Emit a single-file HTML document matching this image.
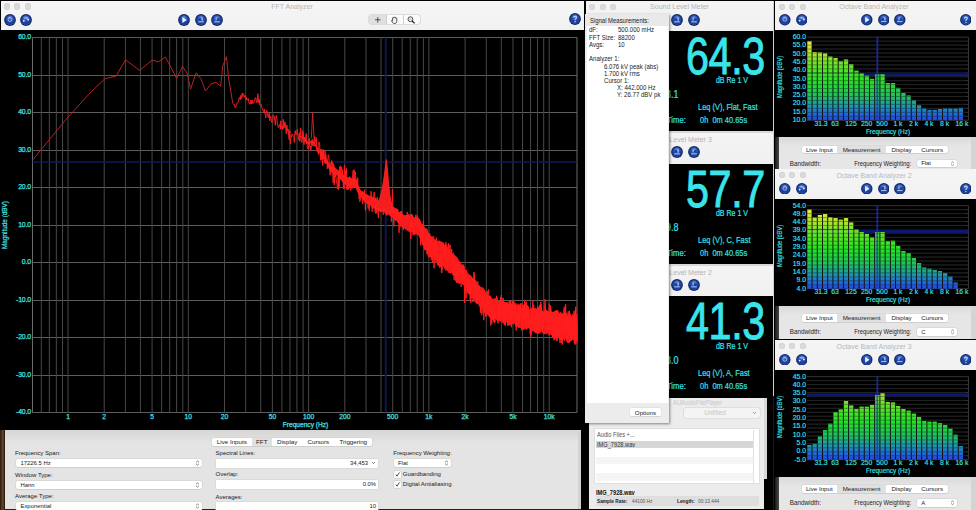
<!DOCTYPE html>
<html><head><meta charset="utf-8"><title>FFT Analyzer</title>
<style>
html,body{margin:0;padding:0;}
body{width:976px;height:510px;overflow:hidden;position:relative;background:#000;font-family:"Liberation Sans", sans-serif;}
div{box-sizing:border-box;}
</style></head><body>
<svg width="0" height="0" style="position:absolute"><defs><radialGradient id="bg1" cx="50%" cy="25%" r="75%"><stop offset="0" stop-color="#7094dc"/><stop offset="0.35" stop-color="#2c54b4"/><stop offset="0.75" stop-color="#1a3c96"/><stop offset="1" stop-color="#2652b0"/></radialGradient></defs></svg>
<div style="position:absolute;left:1px;top:1px;width:583px;height:29px;background:linear-gradient(#f6f6f6,#f1f1f1);"></div>
<div style="position:absolute;left:3.5999999999999996px;top:3.3999999999999995px;width:6.4px;height:6.4px;border-radius:50%;background:#dadada;box-shadow:inset 0 0 0 0.5px #cfcfcf"></div>
<div style="position:absolute;left:14.100000000000001px;top:3.3999999999999995px;width:6.4px;height:6.4px;border-radius:50%;background:#dadada;box-shadow:inset 0 0 0 0.5px #cfcfcf"></div>
<div style="position:absolute;left:24.6px;top:3.3999999999999995px;width:6.4px;height:6.4px;border-radius:50%;background:#dadada;box-shadow:inset 0 0 0 0.5px #cfcfcf"></div>
<div style="position:absolute;left:-8px;width:600px;text-align:center;top:3.08px;font-size:7px;line-height:8.4px;color:#b4b4b4;white-space:nowrap;">FFT Analyzer</div>
<svg style="position:absolute;left:3.8000000000000007px;top:13.600000000000001px" width="12" height="12" viewBox="0 0 12 12"><circle cx="6" cy="6" r="5.9" fill="#0f2464"/><circle cx="6" cy="6.1" r="4.9" fill="url(#bg1)"/><circle cx="6" cy="5.5" r="2" fill="none" stroke="#a8c0ee" stroke-width="0.9"/></svg>
<svg style="position:absolute;left:20.3px;top:13.600000000000001px" width="12" height="12" viewBox="0 0 12 12"><circle cx="6" cy="6" r="5.9" fill="#0f2464"/><circle cx="6" cy="6.1" r="4.9" fill="url(#bg1)"/><circle cx="3.8" cy="6.8" r="0.9" fill="#fff"/><circle cx="8.2" cy="5.6" r="0.9" fill="#fff"/><rect x="3.5" y="3.6" width="5" height="0.9" fill="#b8ccf3"/></svg>
<svg style="position:absolute;left:178.2px;top:13.5px" width="12" height="12" viewBox="0 0 12 12"><circle cx="6" cy="6" r="5.9" fill="#0f2464"/><circle cx="6" cy="6.1" r="4.9" fill="url(#bg1)"/><path d="M4.3 3 L8.8 6 L4.3 9 Z" fill="#e8f0ff"/></svg>
<svg style="position:absolute;left:194.8px;top:13.5px" width="12" height="12" viewBox="0 0 12 12"><circle cx="6" cy="6" r="5.9" fill="#0f2464"/><circle cx="6" cy="6.1" r="4.9" fill="url(#bg1)"/><rect x="3.2" y="7.3" width="5.6" height="1.1" fill="#a9c2f2"/><rect x="4.2" y="4.3" width="3.2" height="2.2" fill="#1a3a90"/><rect x="6.5" y="3.6" width="1.2" height="3" fill="#c8d8f8"/></svg>
<svg style="position:absolute;left:211.2px;top:13.5px" width="12" height="12" viewBox="0 0 12 12"><circle cx="6" cy="6" r="5.9" fill="#0f2464"/><circle cx="6" cy="6.1" r="4.9" fill="url(#bg1)"/><rect x="3.2" y="7.3" width="5.6" height="1.1" fill="#a9c2f2"/><rect x="4.4" y="4.6" width="3.6" height="1.8" fill="#1a3a90"/><rect x="4.6" y="3.8" width="1" height="2.6" fill="#c8d8f8"/></svg>
<svg style="position:absolute;left:568.8px;top:13.399999999999999px" width="12" height="12" viewBox="0 0 12 12"><circle cx="6" cy="6" r="5.9" fill="#0f2464"/><circle cx="6" cy="6.1" r="4.9" fill="url(#bg1)"/><path d="M4.5 4.6 C4.5 2.9 7.5 2.9 7.5 4.5 C7.5 5.6 6.1 5.7 6.1 7.2" fill="none" stroke="#b4cdf6" stroke-width="1.2"/><circle cx="6.1" cy="8.7" r="0.75" fill="#b4cdf6"/></svg>
<div style="position:absolute;left:369px;top:15.2px;width:51.2px;height:9.3px;border-radius:2.2px;background:#fbfbfb;box-shadow:0 0 0 0.5px #c4c4c4;"></div>
<div style="position:absolute;left:369px;top:15.2px;width:17.4px;height:9.3px;background:#e0e0e0;border-radius:2.2px 0 0 2.2px;"></div>
<div style="position:absolute;left:386.4px;top:15.2px;width:0.5px;height:9.3px;background:#cfcfcf;"></div>
<div style="position:absolute;left:403.3px;top:15.2px;width:0.5px;height:9.3px;background:#cfcfcf;"></div>
<svg style="position:absolute;left:369px;top:15px" width="52" height="10" viewBox="0 0 52 10"><path d="M8.8 2 V7.6 M6 4.8 H11.6" stroke="#3a3a3a" stroke-width="0.85"/><path d="M24.6 8.3 C23.2 7.6 22.6 6.6 22.7 5.3 L23.6 5.8 L23.5 3.2 C23.5 2.5 24.4 2.5 24.5 3.2 L24.6 2.5 C24.7 1.8 25.6 1.8 25.7 2.5 L25.8 2.7 C25.9 2.1 26.8 2.1 26.8 2.8 L26.9 3.4 C27 2.9 27.8 2.9 27.8 3.5 L27.8 6.3 C27.8 7.5 27.2 8.2 26.4 8.5 Z" fill="#f4f4f4" stroke="#333" stroke-width="0.8"/><circle cx="41.4" cy="4.2" r="2.4" fill="#fff" stroke="#333" stroke-width="0.9"/><path d="M43.1 6 L45.6 8.4" stroke="#222" stroke-width="1.3"/><path d="M40.4 4.2 H42.4" stroke="#555" stroke-width="0.6"/></svg>
<div style="position:absolute;left:0px;top:31px;width:585px;height:399px;background:#000;"></div>
<svg style="position:absolute;left:0;top:0" width="976" height="510" viewBox="0 0 976 510"><line x1="32.5" y1="37.5" x2="577" y2="37.5" stroke="#5e5e5e" stroke-width="1"/><line x1="32.5" y1="75.5" x2="577" y2="75.5" stroke="#5e5e5e" stroke-width="1"/><line x1="32.5" y1="112.5" x2="577" y2="112.5" stroke="#5e5e5e" stroke-width="1"/><line x1="32.5" y1="150.5" x2="577" y2="150.5" stroke="#5e5e5e" stroke-width="1"/><line x1="32.5" y1="187.5" x2="577" y2="187.5" stroke="#5e5e5e" stroke-width="1"/><line x1="32.5" y1="225.5" x2="577" y2="225.5" stroke="#5e5e5e" stroke-width="1"/><line x1="32.5" y1="262.5" x2="577" y2="262.5" stroke="#5e5e5e" stroke-width="1"/><line x1="32.5" y1="300.5" x2="577" y2="300.5" stroke="#5e5e5e" stroke-width="1"/><line x1="32.5" y1="337.5" x2="577" y2="337.5" stroke="#5e5e5e" stroke-width="1"/><line x1="32.5" y1="375.5" x2="577" y2="375.5" stroke="#5e5e5e" stroke-width="1"/><line x1="32.5" y1="412.5" x2="577" y2="412.5" stroke="#5e5e5e" stroke-width="1"/><line x1="41.31" y1="37.5" x2="41.31" y2="412.5" stroke="#484848" stroke-width="1"/><line x1="49.37" y1="37.5" x2="49.37" y2="412.5" stroke="#484848" stroke-width="1"/><line x1="56.34" y1="37.5" x2="56.34" y2="412.5" stroke="#484848" stroke-width="1"/><line x1="62.50" y1="37.5" x2="62.50" y2="412.5" stroke="#484848" stroke-width="1"/><line x1="68.00" y1="37.5" x2="68.00" y2="412.5" stroke="#484848" stroke-width="1"/><line x1="104.21" y1="37.5" x2="104.21" y2="412.5" stroke="#484848" stroke-width="1"/><line x1="125.40" y1="37.5" x2="125.40" y2="412.5" stroke="#484848" stroke-width="1"/><line x1="140.43" y1="37.5" x2="140.43" y2="412.5" stroke="#484848" stroke-width="1"/><line x1="152.09" y1="37.5" x2="152.09" y2="412.5" stroke="#484848" stroke-width="1"/><line x1="161.61" y1="37.5" x2="161.61" y2="412.5" stroke="#484848" stroke-width="1"/><line x1="169.67" y1="37.5" x2="169.67" y2="412.5" stroke="#484848" stroke-width="1"/><line x1="176.64" y1="37.5" x2="176.64" y2="412.5" stroke="#484848" stroke-width="1"/><line x1="182.80" y1="37.5" x2="182.80" y2="412.5" stroke="#484848" stroke-width="1"/><line x1="188.30" y1="37.5" x2="188.30" y2="412.5" stroke="#484848" stroke-width="1"/><line x1="224.51" y1="37.5" x2="224.51" y2="412.5" stroke="#484848" stroke-width="1"/><line x1="245.70" y1="37.5" x2="245.70" y2="412.5" stroke="#484848" stroke-width="1"/><line x1="260.73" y1="37.5" x2="260.73" y2="412.5" stroke="#484848" stroke-width="1"/><line x1="272.39" y1="37.5" x2="272.39" y2="412.5" stroke="#484848" stroke-width="1"/><line x1="281.91" y1="37.5" x2="281.91" y2="412.5" stroke="#484848" stroke-width="1"/><line x1="289.97" y1="37.5" x2="289.97" y2="412.5" stroke="#484848" stroke-width="1"/><line x1="296.94" y1="37.5" x2="296.94" y2="412.5" stroke="#484848" stroke-width="1"/><line x1="303.10" y1="37.5" x2="303.10" y2="412.5" stroke="#484848" stroke-width="1"/><line x1="308.60" y1="37.5" x2="308.60" y2="412.5" stroke="#484848" stroke-width="1"/><line x1="344.81" y1="37.5" x2="344.81" y2="412.5" stroke="#484848" stroke-width="1"/><line x1="366.00" y1="37.5" x2="366.00" y2="412.5" stroke="#484848" stroke-width="1"/><line x1="381.03" y1="37.5" x2="381.03" y2="412.5" stroke="#484848" stroke-width="1"/><line x1="392.69" y1="37.5" x2="392.69" y2="412.5" stroke="#484848" stroke-width="1"/><line x1="402.21" y1="37.5" x2="402.21" y2="412.5" stroke="#484848" stroke-width="1"/><line x1="410.27" y1="37.5" x2="410.27" y2="412.5" stroke="#484848" stroke-width="1"/><line x1="417.24" y1="37.5" x2="417.24" y2="412.5" stroke="#484848" stroke-width="1"/><line x1="423.40" y1="37.5" x2="423.40" y2="412.5" stroke="#484848" stroke-width="1"/><line x1="428.90" y1="37.5" x2="428.90" y2="412.5" stroke="#484848" stroke-width="1"/><line x1="465.11" y1="37.5" x2="465.11" y2="412.5" stroke="#484848" stroke-width="1"/><line x1="486.30" y1="37.5" x2="486.30" y2="412.5" stroke="#484848" stroke-width="1"/><line x1="501.33" y1="37.5" x2="501.33" y2="412.5" stroke="#484848" stroke-width="1"/><line x1="512.99" y1="37.5" x2="512.99" y2="412.5" stroke="#484848" stroke-width="1"/><line x1="522.51" y1="37.5" x2="522.51" y2="412.5" stroke="#484848" stroke-width="1"/><line x1="530.57" y1="37.5" x2="530.57" y2="412.5" stroke="#484848" stroke-width="1"/><line x1="537.54" y1="37.5" x2="537.54" y2="412.5" stroke="#484848" stroke-width="1"/><line x1="543.70" y1="37.5" x2="543.70" y2="412.5" stroke="#484848" stroke-width="1"/><line x1="549.20" y1="37.5" x2="549.20" y2="412.5" stroke="#484848" stroke-width="1"/><line x1="32.5" y1="37.5" x2="32.5" y2="412.5" stroke="#6a6a6a" stroke-width="1"/><line x1="577" y1="37.5" x2="577" y2="412.5" stroke="#6a6a6a" stroke-width="1"/><line x1="32.5" y1="162" x2="577" y2="162" stroke="#10185a" stroke-width="1.6"/><line x1="385.7" y1="37.5" x2="385.7" y2="412.5" stroke="#10185a" stroke-width="1.8"/><path d="M32.5 160.0 L67.5 117.7 L90.0 93.0 L105.0 78.6 L116.0 76.2 L125.5 59.8 L139.6 70.4 L152.2 60.2 L158.5 61.8 L165.4 57.1 L171.0 67.5 L176.7 78.4 L182.6 66.5 L187.3 73.7 L190.5 89.2 L196.1 72.8 L200.8 78.4 L205.5 91.0 L210.9 84.1 L215.9 82.2 L220.6 86.3 L222.8 65.9 L226.5 56.5 L228.4 76.9 L232.8 103.5" fill="none" stroke="#b82222" stroke-width="1.0" stroke-linejoin="round"/>
<path d="M300.0 135.6 L301.5 136.3 L303.0 137.6 L304.5 139.0 L306.0 140.6 L307.5 141.9 L309.0 141.7 L310.5 140.9 L312.0 140.3 L313.5 140.7 L315.0 143.2 L316.5 145.3 L318.0 148.2 L319.5 150.0 L321.0 151.1 L322.5 152.9 L324.0 154.7 L325.5 157.2 L327.0 160.0 L328.5 162.3 L330.0 164.1 L331.5 166.0 L333.0 166.9 L334.5 167.1 L336.0 168.6 L337.5 169.4 L339.0 171.0 L340.5 172.3 L342.0 173.1 L343.5 174.8 L345.0 176.5 L346.5 177.3 L348.0 177.3 L349.5 177.1 L351.0 178.0 L352.5 178.6 L354.0 178.5 L355.5 178.6 L357.0 181.5 L358.5 185.6 L360.0 188.7 L361.5 191.4 L363.0 191.6 L364.5 192.6 L366.0 193.9 L367.5 194.5 L369.0 195.6 L370.5 196.3 L372.0 196.7 L373.5 197.9 L375.0 198.4 L376.5 199.0 L378.0 200.4 L379.5 200.9 L381.0 201.3 L382.5 199.9 L384.0 200.6 L385.5 200.8 L387.0 202.6 L388.5 203.4 L390.0 204.3 L391.5 204.1 L393.0 206.2 L394.5 207.5 L396.0 208.6 L397.5 209.1 L399.0 212.1 L400.5 211.9 L402.0 213.5 L403.5 214.8 L405.0 215.2 L406.5 214.9 L408.0 215.6 L409.5 215.2 L411.0 214.5 L412.5 214.6 L414.0 217.4 L415.5 216.8 L417.0 217.5 L418.5 217.6 L420.0 219.3 L421.5 223.2 L423.0 224.9 L424.5 226.9 L426.0 228.2 L427.5 229.1 L429.0 234.8 L430.5 235.2 L432.0 237.1 L433.5 235.4 L435.0 240.0 L436.5 241.8 L438.0 240.5 L439.5 240.5 L441.0 241.5 L442.5 241.8 L444.0 244.0 L445.5 246.6 L447.0 246.6 L448.5 248.4 L450.0 251.2 L451.5 253.8 L453.0 255.2 L454.5 254.6 L456.0 256.2 L457.5 257.5 L459.0 260.8 L460.5 261.9 L462.0 264.7 L463.5 264.9 L465.0 269.7 L466.5 269.8 L468.0 273.1 L469.5 274.6 L471.0 275.6 L472.5 277.5 L474.0 279.4 L475.5 279.7 L477.0 283.7 L478.5 285.9 L480.0 285.9 L481.5 287.2 L483.0 287.2 L484.5 289.3 L486.0 292.4 L487.5 293.8 L489.0 297.0 L490.5 295.2 L492.0 298.6 L493.5 298.9 L495.0 297.6 L496.5 299.3 L498.0 301.1 L499.5 301.1 L501.0 301.6 L502.5 301.3 L504.0 301.8 L505.5 301.7 L507.0 302.4 L508.5 303.7 L510.0 303.3 L511.5 305.0 L513.0 305.5 L514.5 305.8 L516.0 302.8 L517.5 305.4 L519.0 304.2 L520.5 307.5 L522.0 307.8 L523.5 304.9 L525.0 307.7 L526.5 305.5 L528.0 307.0 L529.5 309.3 L531.0 307.4 L532.5 308.0 L534.0 307.7 L535.5 308.7 L537.0 308.3 L538.5 306.5 L540.0 307.7 L541.5 309.0 L543.0 311.3 L544.5 310.9 L546.0 309.8 L547.5 310.6 L549.0 311.5 L550.5 309.0 L552.0 312.1 L553.5 311.8 L555.0 310.5 L556.5 310.5 L558.0 309.9 L559.5 312.9 L561.0 313.9 L562.5 313.6 L564.0 313.4 L565.5 316.3 L567.0 314.1 L568.5 316.2 L570.0 312.0 L571.5 316.0 L573.0 313.0 L574.5 316.4 L576.0 314.6 L577.5 314.0 L577.5 341.4 L576.0 344.5 L574.5 344.7 L573.0 339.6 L571.5 339.0 L570.0 342.7 L568.5 342.9 L567.0 342.7 L565.5 338.8 L564.0 338.9 L562.5 339.5 L561.0 340.4 L559.5 339.0 L558.0 337.5 L556.5 338.5 L555.0 338.2 L553.5 337.0 L552.0 335.7 L550.5 334.5 L549.0 335.9 L547.5 333.2 L546.0 334.5 L544.5 334.1 L543.0 333.9 L541.5 331.6 L540.0 333.3 L538.5 333.6 L537.0 333.5 L535.5 333.0 L534.0 331.7 L532.5 331.3 L531.0 330.8 L529.5 328.5 L528.0 328.2 L526.5 329.7 L525.0 328.8 L523.5 329.5 L522.0 326.7 L520.5 328.6 L519.0 327.7 L517.5 324.4 L516.0 328.1 L514.5 323.6 L513.0 324.0 L511.5 325.3 L510.0 325.3 L508.5 325.7 L507.0 322.3 L505.5 321.3 L504.0 323.7 L502.5 322.8 L501.0 322.0 L499.5 320.7 L498.0 321.6 L496.5 320.2 L495.0 317.6 L493.5 318.8 L492.0 318.9 L490.5 318.7 L489.0 317.0 L487.5 314.3 L486.0 314.2 L484.5 313.3 L483.0 309.5 L481.5 307.2 L480.0 305.2 L478.5 303.3 L477.0 304.4 L475.5 302.8 L474.0 300.8 L472.5 298.1 L471.0 298.7 L469.5 293.4 L468.0 294.0 L466.5 289.6 L465.0 287.2 L463.5 285.3 L462.0 283.2 L460.5 283.4 L459.0 284.0 L457.5 282.4 L456.0 279.0 L454.5 275.9 L453.0 275.6 L451.5 273.1 L450.0 273.3 L448.5 273.0 L447.0 268.9 L445.5 271.0 L444.0 267.7 L442.5 265.6 L441.0 267.8 L439.5 266.5 L438.0 266.1 L436.5 262.0 L435.0 259.4 L433.5 258.1 L432.0 259.0 L430.5 255.4 L429.0 257.7 L427.5 252.5 L426.0 249.9 L424.5 250.4 L423.0 245.5 L421.5 242.4 L420.0 238.8 L418.5 235.5 L417.0 234.6 L415.5 234.4 L414.0 232.9 L412.5 233.1 L411.0 231.2 L409.5 232.2 L408.0 230.9 L406.5 230.2 L405.0 228.9 L403.5 227.4 L402.0 227.7 L400.5 224.8 L399.0 223.9 L397.5 221.9 L396.0 220.2 L394.5 220.2 L393.0 218.4 L391.5 216.4 L390.0 216.2 L388.5 214.6 L387.0 214.9 L385.5 214.7 L384.0 212.0 L382.5 211.6 L381.0 212.0 L379.5 211.8 L378.0 211.6 L376.5 209.5 L375.0 208.2 L373.5 209.0 L372.0 207.6 L370.5 205.5 L369.0 205.6 L367.5 204.2 L366.0 203.0 L364.5 201.7 L363.0 200.3 L361.5 197.8 L360.0 196.5 L358.5 194.5 L357.0 191.6 L355.5 187.3 L354.0 187.7 L352.5 186.9 L351.0 187.4 L349.5 187.0 L348.0 186.7 L346.5 185.9 L345.0 184.6 L343.5 183.1 L342.0 181.4 L340.5 179.7 L339.0 177.8 L337.5 175.7 L336.0 175.0 L334.5 173.9 L333.0 173.2 L331.5 172.9 L330.0 170.9 L328.5 168.6 L327.0 164.7 L325.5 162.1 L324.0 159.2 L322.5 157.0 L321.0 155.3 L319.5 153.5 L318.0 151.1 L316.5 148.8 L315.0 146.0 L313.5 143.2 L312.0 142.6 L310.5 143.4 L309.0 144.1 L307.5 144.2 L306.0 142.7 L304.5 140.9 L303.0 139.3 L301.5 137.8 L300.0 137.1 Z" fill="#f41a1a"/>
<path d="M232.8 103.6 L233.3 104.2 L233.8 104.7 L234.3 104.4 L234.8 106.9 L235.3 107.9 L235.8 106.8 L236.3 104.9 L236.8 104.1 L237.3 102.7 L237.8 102.1 L238.3 102.1 L238.8 100.1 L239.3 97.3 L239.8 97.7 L240.3 99.7 L240.8 95.3 L241.3 98.6 L241.8 96.1 L242.3 92.9 L242.8 96.8 L243.3 93.6 L243.8 94.7 L244.3 95.1 L244.8 97.4 L245.3 95.6 L245.8 99.6 L246.3 97.3 L246.8 100.2 L247.3 98.9 L247.8 100.1 L248.3 98.6 L248.8 101.5 L249.3 103.8 L249.8 103.8 L250.3 104.1 L250.8 100.1 L251.3 101.2 L251.8 104.1 L252.3 99.9 L252.8 103.3 L253.3 102.9 L253.8 103.0 L254.3 101.5 L254.8 99.9 L255.3 97.7 L255.8 97.8 L256.3 100.7 L256.8 102.7 L257.3 101.9 L257.8 93.7 L258.3 98.2 L258.8 102.9 L259.3 99.4 L259.8 105.3 L260.3 105.0 L260.8 105.0 L261.3 104.7 L261.8 107.4 L262.3 108.3 L262.8 109.0 L263.3 111.5 L263.8 111.7 L264.3 108.9 L264.8 113.5 L265.3 114.9 L265.8 118.0 L266.3 111.6 L266.8 110.1 L267.3 113.6 L267.8 116.0 L268.3 117.8 L268.8 114.8 L269.3 112.2 L269.8 120.9 L270.3 116.2 L270.8 116.3 L271.3 120.2 L271.8 122.5 L272.3 120.9 L272.8 120.7 L273.3 115.4 L273.8 115.5 L274.3 116.5 L274.8 120.6 L275.3 125.3 L275.8 118.6 L276.3 115.5 L276.8 118.2 L277.3 124.0 L277.8 125.1 L278.3 127.7 L278.8 126.6 L279.3 125.2 L279.8 124.1 L280.3 129.3 L280.8 120.8 L281.3 126.7 L281.8 128.9 L282.3 125.7 L282.8 129.6 L283.3 119.3 L283.8 128.1 L284.3 127.9 L284.8 121.7 L285.3 122.6 L285.8 130.1 L286.3 133.8 L286.8 124.9 L287.3 127.8 L287.8 131.4 L288.3 129.3 L288.8 137.9 L289.3 139.9 L289.8 130.8 L290.3 144.1 L290.8 138.6 L291.3 137.5 L291.8 134.5 L292.3 133.9 L292.8 134.8 L293.3 136.4 L293.8 137.3 L294.3 142.5 L294.8 133.1 L295.3 130.6 L295.8 134.9 L296.3 134.5 L296.8 132.9 L297.3 129.5 L297.8 134.6 L298.3 139.6 L298.8 139.9 L299.3 132.9 L299.8 141.5 L300.3 130.5 L300.7 128.3 L301.0 137.9 L301.4 141.2 L301.7 142.5 L302.1 140.2 L302.4 133.5 L302.8 130.8 L303.1 138.4 L303.5 133.2 L303.8 144.7 L304.2 144.2 L304.5 137.2 L304.9 139.0 L305.2 141.6 L305.6 138.1 L305.9 135.1 L306.3 133.5 L306.6 143.8 L307.0 140.7 L307.3 148.6 L307.7 147.4 L308.0 147.4 L308.4 149.1 L308.7 148.1 L309.1 139.4 L309.4 138.2 L309.8 146.0 L310.1 147.3 L310.5 146.0 L310.8 150.7 L311.2 147.8 L311.5 144.1 L311.9 140.5 L312.2 139.1 L312.6 145.1 L312.9 145.9 L313.3 143.6 L313.6 142.5 L314.0 146.4 L314.3 136.9 L314.7 136.4 L315.0 143.4 L315.4 140.4 L315.7 141.3 L316.1 137.4 L316.4 138.8 L316.8 150.5 L317.1 151.4 L317.5 149.9 L317.8 152.2 L318.2 152.9 L318.5 154.6 L318.9 141.8 L319.2 143.8 L319.6 143.3 L319.9 149.9 L320.3 150.1 L320.6 160.3 L321.0 149.0 L321.3 159.8 L321.7 151.0 L322.0 156.8 L322.4 151.3 L322.7 165.4 L323.1 149.3 L323.4 158.8 L323.8 149.9 L324.1 159.4 L324.5 158.2 L324.8 163.0 L325.2 150.4 L325.5 163.8 L325.9 154.5 L326.2 162.4 L326.6 160.5 L326.9 160.7 L327.3 168.8 L327.6 161.4 L328.0 157.6 L328.3 154.7 L328.7 155.7 L329.0 157.3 L329.4 167.6 L329.7 166.5 L330.1 175.3 L330.4 172.8 L330.8 163.2 L331.1 162.2 L331.5 164.6 L331.8 160.4 L332.2 170.4 L332.5 162.5 L332.9 177.4 L333.2 183.1 L333.6 163.7 L333.9 165.3 L334.3 184.9 L334.6 167.8 L335.0 170.4 L335.3 177.5 L335.7 172.4 L336.0 176.3 L336.4 181.8 L336.7 183.5 L337.1 184.4 L337.4 189.0 L337.8 183.1 L338.1 176.1 L338.5 189.7 L338.8 170.4 L339.2 186.5 L339.5 166.6 L339.9 169.6 L340.2 178.7 L340.6 165.9 L340.9 167.9 L341.3 168.7 L341.6 167.0 L342.0 175.3 L342.3 169.3 L342.7 173.9 L343.0 179.8 L343.4 188.5 L343.7 178.7 L344.1 188.8 L344.4 165.3 L344.8 183.8 L345.1 170.0 L345.5 172.2 L345.8 181.9 L346.2 179.0 L346.5 168.4 L346.9 189.9 L347.2 186.3 L347.6 180.5 L347.9 190.1 L348.3 181.4 L348.6 188.8 L349.0 182.2 L349.3 179.0 L349.7 176.7 L350.0 179.2 L350.4 178.2 L350.7 190.5 L351.1 178.0 L351.4 181.2 L351.8 188.8 L352.1 179.7 L352.5 178.1 L352.8 174.9 L353.2 170.3 L353.5 186.5 L353.9 175.0 L354.2 169.6 L354.6 183.3 L354.9 186.2 L355.3 171.9 L355.6 175.4 L356.0 179.2 L356.3 188.0 L356.7 179.7 L357.0 180.2 L357.4 191.2 L357.7 177.6 L358.1 190.0 L358.4 187.8 L358.8 191.9 L359.1 198.9 L359.5 191.7 L359.8 201.8 L360.2 200.4 L360.5 198.9 L360.9 190.9 L361.2 193.2 L361.6 195.1 L361.9 191.2 L362.3 198.8 L362.6 204.0 L363.0 199.9 L363.3 195.6 L363.7 199.6 L364.0 198.0 L364.4 189.8 L364.7 200.6 L365.1 202.9 L365.4 210.5 L365.8 195.7 L366.1 197.2 L366.5 194.4 L366.8 199.3 L367.2 200.4 L367.5 200.8 L367.9 204.7 L368.2 208.6 L368.6 200.5 L368.9 204.0 L369.3 211.0 L369.6 205.6 L370.0 204.2 L370.3 203.4 L370.7 199.1 L371.0 191.2 L371.4 195.4 L371.7 195.2 L372.1 211.7 L372.4 202.6 L372.8 207.9 L373.1 196.8 L373.5 203.9 L373.8 196.1 L374.2 192.1 L374.5 200.6 L374.9 206.3 L375.2 212.2 L375.6 197.7 L375.9 213.6 L376.3 204.1 L376.6 213.2 L377.0 207.0 L377.3 197.0 L377.7 203.3 L378.0 213.0 L378.4 218.1 L378.7 201.4 L379.1 201.7 L379.4 210.0 L379.8 209.4 L380.1 201.0 L380.5 211.8 L380.8 200.5 L381.2 209.0 L381.5 208.4 L381.9 211.6 L382.2 210.0 L382.6 205.1 L382.9 207.6 L383.3 214.8 L383.6 206.0 L384.0 207.9 L384.3 205.3 L384.7 206.8 L385.0 210.9 L385.4 200.7 L385.7 213.4 L386.1 206.4 L386.4 197.5 L386.8 215.5 L387.1 196.9 L387.5 205.6 L387.8 199.8 L388.2 210.0 L388.5 200.9 L388.9 202.7 L389.2 202.4 L389.6 212.5 L389.9 198.6 L390.3 213.6 L390.6 205.1 L391.0 201.2 L391.3 221.7 L391.7 210.1 L392.0 208.4 L392.4 189.5 L392.7 206.7 L393.1 207.5 L393.4 211.9 L393.8 226.4 L394.1 211.6 L394.5 217.9 L394.8 213.9 L395.2 220.8 L395.5 209.1 L395.9 208.4 L396.2 210.6 L396.6 219.7 L396.9 213.3 L397.3 213.9 L397.6 209.1 L398.0 222.6 L398.3 212.1 L398.7 214.4 L399.0 232.8 L399.4 224.2 L399.7 218.9 L400.1 213.5 L400.4 226.6 L400.8 211.1 L401.1 222.4 L401.5 211.1 L401.8 216.7 L402.2 214.9 L402.5 214.1 L402.9 220.9 L403.2 229.9 L403.6 229.8 L403.9 225.5 L404.3 218.0 L404.6 220.1 L405.0 217.3 L405.3 215.4 L405.7 219.5 L406.0 215.4 L406.4 218.9 L406.7 225.7 L407.1 211.9 L407.4 212.2 L407.8 219.9 L408.1 216.4 L408.5 215.0 L408.8 214.0 L409.2 217.7 L409.5 218.1 L409.9 229.9 L410.2 222.3 L410.6 230.9 L410.9 239.0 L411.3 219.1 L411.6 213.9 L412.0 226.8 L412.3 221.4 L412.7 225.2 L413.0 235.1 L413.4 232.7 L413.7 229.7 L414.1 235.0 L414.4 227.9 L414.8 222.4 L415.1 221.4 L415.5 219.2 L415.8 214.9 L416.2 228.0 L416.5 229.9 L416.9 230.9 L417.2 215.4 L417.6 220.9 L417.9 227.7 L418.3 228.7 L418.6 226.6 L419.0 229.5 L419.3 220.2 L419.7 224.0 L420.0 230.5 L420.2 222.5 L420.4 234.3 L420.6 245.4 L420.8 225.5 L421.0 239.3 L421.2 238.9 L421.4 226.8 L421.6 228.3 L421.8 241.2 L422.0 239.0 L422.2 227.1 L422.4 245.0 L422.6 224.6 L422.8 233.8 L423.0 227.6 L423.2 230.4 L423.4 220.6 L423.6 220.7 L423.8 245.7 L424.0 235.0 L424.2 234.9 L424.4 242.5 L424.6 249.1 L424.8 239.0 L425.0 241.4 L425.2 235.6 L425.4 230.2 L425.6 237.0 L425.8 245.3 L426.0 250.2 L426.2 233.0 L426.4 249.4 L426.6 232.6 L426.8 241.1 L427.0 254.2 L427.2 242.0 L427.4 243.4 L427.6 254.1 L427.8 249.6 L428.0 234.5 L428.2 255.7 L428.4 245.0 L428.6 253.2 L428.8 233.0 L429.0 257.3 L429.2 249.6 L429.4 247.7 L429.6 232.9 L429.8 235.4 L430.0 249.1 L430.2 257.0 L430.4 246.9 L430.6 254.2 L430.8 249.4 L431.0 236.6 L431.2 259.7 L431.4 248.8 L431.6 243.4 L431.8 240.9 L432.0 246.6 L432.2 261.0 L432.4 255.4 L432.6 258.1 L432.8 262.9 L433.0 257.2 L433.2 251.5 L433.4 246.1 L433.6 242.9 L433.8 255.8 L434.0 267.2 L434.2 268.2 L434.4 250.2 L434.6 246.5 L434.8 242.1 L435.0 261.9 L435.2 242.3 L435.4 256.0 L435.6 245.1 L435.8 239.4 L436.0 255.5 L436.2 258.0 L436.4 255.7 L436.6 237.5 L436.8 245.4 L437.0 258.1 L437.2 246.5 L437.4 253.6 L437.6 249.5 L437.8 264.8 L438.0 246.0 L438.2 262.8 L438.4 259.5 L438.6 253.7 L438.8 255.6 L439.0 249.9 L439.2 252.7 L439.4 251.8 L439.6 267.6 L439.8 251.0 L440.0 260.1 L440.2 266.1 L440.4 250.2 L440.6 250.4 L440.8 243.8 L441.0 253.1 L441.2 260.7 L441.4 272.3 L441.6 267.0 L441.8 272.9 L442.0 254.9 L442.2 270.1 L442.4 244.5 L442.6 244.3 L442.8 261.0 L443.0 264.8 L443.2 246.2 L443.4 264.9 L443.6 242.9 L443.8 258.1 L444.0 252.9 L444.2 258.2 L444.4 254.1 L444.6 248.3 L444.8 244.8 L445.0 252.9 L445.2 262.5 L445.4 256.5 L445.6 267.5 L445.8 242.2 L446.0 265.6 L446.2 265.8 L446.4 264.0 L446.6 254.6 L446.8 244.7 L447.0 255.1 L447.2 271.1 L447.4 270.1 L447.6 264.4 L447.8 255.2 L448.0 254.8 L448.2 264.2 L448.4 257.0 L448.6 243.4 L448.8 254.0 L449.0 245.2 L449.2 257.3 L449.4 257.5 L449.6 257.6 L449.8 254.5 L450.0 244.7 L450.2 250.0 L450.4 266.7 L450.6 261.4 L450.8 269.2 L451.0 268.3 L451.2 248.9 L451.4 262.2 L451.6 249.0 L451.8 249.5 L452.0 267.4 L452.2 253.9 L452.4 271.7 L452.6 263.1 L452.8 270.2 L453.0 270.9 L453.2 252.7 L453.4 274.2 L453.6 257.5 L453.8 274.5 L454.0 278.0 L454.2 280.1 L454.4 266.7 L454.6 273.7 L454.8 260.0 L455.0 262.1 L455.2 263.5 L455.4 264.9 L455.6 281.2 L455.8 262.7 L456.0 272.9 L456.2 276.9 L456.4 268.0 L456.6 282.6 L456.8 269.5 L457.0 260.9 L457.2 260.9 L457.4 274.6 L457.6 282.9 L457.8 262.2 L458.0 263.1 L458.2 261.8 L458.4 282.7 L458.6 269.7 L458.8 268.8 L459.0 269.2 L459.2 273.4 L459.4 264.8 L459.6 265.5 L459.8 270.7 L460.0 278.4 L460.2 271.3 L460.4 275.0 L460.6 266.4 L460.8 271.7 L461.0 272.5 L461.2 286.8 L461.4 271.5 L461.6 267.7 L461.8 267.2 L462.0 277.7 L462.2 273.7 L462.4 280.5 L462.6 275.5 L462.8 284.4 L463.0 264.4 L463.2 274.7 L463.4 266.7 L463.6 274.2 L463.8 276.5 L464.0 266.3 L464.2 280.6 L464.4 290.0 L464.6 303.0 L464.8 284.4 L465.0 273.0 L465.2 273.7 L465.4 292.5 L465.6 288.0 L465.8 289.2 L466.0 298.4 L466.2 298.2 L466.4 288.5 L466.6 287.0 L466.8 281.3 L467.0 286.9 L467.2 279.4 L467.4 285.1 L467.6 278.5 L467.8 280.8 L468.0 293.3 L468.2 290.2 L468.4 280.2 L468.6 278.4 L468.8 282.2 L469.0 293.7 L469.2 285.1 L469.4 294.4 L469.6 277.8 L469.8 278.1 L470.0 279.6 L470.2 300.0 L470.4 282.5 L470.6 285.7 L470.8 303.0 L471.0 294.1 L471.2 286.8 L471.4 282.0 L471.6 282.5 L471.8 286.2 L472.0 292.8 L472.2 278.7 L472.4 282.2 L472.6 289.5 L472.8 290.3 L473.0 302.0 L473.2 299.5 L473.4 300.3 L473.6 293.5 L473.8 276.8 L474.0 271.9 L474.2 291.4 L474.4 274.5 L474.6 278.8 L474.8 284.3 L475.0 281.3 L475.2 284.2 L475.4 282.7 L475.6 297.0 L475.8 280.6 L476.0 286.8 L476.2 286.9 L476.4 302.9 L476.6 294.6 L476.8 290.7 L477.0 299.2 L477.2 295.4 L477.4 290.2 L477.6 303.3 L477.8 281.4 L478.0 299.1 L478.2 300.2 L478.4 291.9 L478.6 290.7 L478.8 293.6 L479.0 285.2 L479.2 306.4 L479.4 303.2 L479.6 305.1 L479.8 294.3 L480.0 289.3 L480.2 307.3 L480.4 312.8 L480.6 303.5 L480.8 311.0 L481.0 304.6 L481.2 305.3 L481.4 292.0 L481.6 311.2 L481.8 315.0 L482.0 300.5 L482.2 291.9 L482.4 302.9 L482.6 300.6 L482.8 291.2 L483.0 311.4 L483.2 313.0 L483.4 307.9 L483.6 301.8 L483.8 320.2 L484.0 311.2 L484.2 305.1 L484.4 291.3 L484.6 302.1 L484.8 300.2 L485.0 300.4 L485.2 297.6 L485.4 302.6 L485.6 314.0 L485.8 316.7 L486.0 309.2 L486.2 302.1 L486.4 308.2 L486.6 307.9 L486.8 302.3 L487.0 315.6 L487.2 291.0 L487.4 301.8 L487.6 305.1 L487.8 306.9 L488.0 292.6 L488.2 291.1 L488.4 289.5 L488.6 291.0 L488.8 303.3 L489.0 315.4 L489.2 295.5 L489.4 301.0 L489.6 299.7 L489.8 306.0 L490.0 305.9 L490.2 305.7 L490.4 308.4 L490.6 310.4 L490.8 325.5 L491.0 316.8 L491.2 316.6 L491.4 315.7 L491.6 304.9 L491.8 324.0 L492.0 300.2 L492.2 307.3 L492.4 308.8 L492.6 320.0 L492.8 318.1 L493.0 311.5 L493.2 316.9 L493.4 314.3 L493.6 321.8 L493.8 306.4 L494.0 307.3 L494.2 312.7 L494.4 323.1 L494.6 319.3 L494.8 312.1 L495.0 322.1 L495.2 308.3 L495.4 304.4 L495.6 318.9 L495.8 305.6 L496.0 303.6 L496.2 300.5 L496.4 301.8 L496.6 295.8 L496.8 302.1 L497.0 297.4 L497.2 304.1 L497.4 308.2 L497.6 310.0 L497.8 318.3 L498.0 323.4 L498.2 312.5 L498.4 308.0 L498.6 319.9 L498.8 304.0 L499.0 306.1 L499.2 308.1 L499.4 318.7 L499.6 302.7 L499.8 315.9 L500.0 307.3 L500.2 320.8 L500.4 297.2 L500.6 302.2 L500.8 304.9 L501.0 310.1 L501.2 301.7 L501.4 295.0 L501.6 302.4 L501.8 309.8 L502.0 319.6 L502.2 314.7 L502.4 308.6 L502.6 310.1 L502.8 318.6 L503.0 297.7 L503.2 315.2 L503.4 299.2 L503.6 314.2 L503.8 310.0 L504.0 321.3 L504.2 322.5 L504.4 324.4 L504.6 307.6 L504.8 325.1 L505.0 302.8 L505.2 317.9 L505.4 325.7 L505.6 318.1 L505.8 312.7 L506.0 307.3 L506.2 310.4 L506.4 302.8 L506.6 308.4 L506.8 312.6 L507.0 306.5 L507.2 323.1 L507.4 319.3 L507.6 302.3 L507.8 325.8 L508.0 321.1 L508.2 316.5 L508.4 312.8 L508.6 306.9 L508.8 311.5 L509.0 304.8 L509.2 300.7 L509.4 305.3 L509.6 324.4 L509.8 310.1 L510.0 301.9 L510.2 313.4 L510.4 322.7 L510.6 300.8 L510.8 304.4 L511.0 319.7 L511.2 303.6 L511.4 327.2 L511.6 315.2 L511.8 319.6 L512.0 306.6 L512.2 300.9 L512.4 301.9 L512.6 317.4 L512.8 302.2 L513.0 300.8 L513.2 303.5 L513.4 309.5 L513.6 313.5 L513.8 301.4 L514.0 323.3 L514.2 312.8 L514.4 307.1 L514.6 315.5 L514.8 302.6 L515.0 317.9 L515.2 305.2 L515.4 322.5 L515.6 324.5 L515.8 319.9 L516.0 321.2 L516.2 330.4 L516.4 314.0 L516.6 313.1 L516.8 322.9 L517.0 321.0 L517.2 327.0 L517.4 312.6 L517.6 323.6 L517.8 316.9 L518.0 308.2 L518.2 303.7 L518.4 313.3 L518.6 327.6 L518.8 312.4 L519.0 315.6 L519.2 322.2 L519.4 316.3 L519.6 308.8 L519.8 314.9 L520.0 304.3 L520.2 312.5 L520.4 316.3 L520.6 304.2 L520.8 313.0 L521.0 303.0 L521.2 311.1 L521.4 322.5 L521.6 319.0 L521.8 330.5 L522.0 322.9 L522.2 315.7 L522.4 317.3 L522.6 304.7 L522.8 329.1 L523.0 313.8 L523.2 314.1 L523.4 314.2 L523.6 329.7 L523.8 304.5 L524.0 304.6 L524.2 322.3 L524.4 310.7 L524.6 299.9 L524.8 303.6 L525.0 323.1 L525.2 309.8 L525.4 306.0 L525.6 307.6 L525.8 302.6 L526.0 326.3 L526.2 301.7 L526.4 309.0 L526.6 317.1 L526.8 328.5 L527.0 321.6 L527.2 305.0 L527.4 316.8 L527.6 311.2 L527.8 308.0 L528.0 314.3 L528.2 326.1 L528.4 306.4 L528.6 319.4 L528.8 315.1 L529.0 324.3 L529.2 325.0 L529.4 326.4 L529.6 323.0 L529.8 321.6 L530.0 320.3 L530.2 334.0 L530.4 323.8 L530.6 319.4 L530.8 337.3 L531.0 313.6 L531.2 335.2 L531.4 329.5 L531.6 320.1 L531.8 316.1 L532.0 312.8 L532.2 310.6 L532.4 324.9 L532.6 313.0 L532.8 300.9 L533.0 326.8 L533.2 327.1 L533.4 323.6 L533.6 304.7 L533.8 306.3 L534.0 327.9 L534.2 322.7 L534.4 325.2 L534.6 318.1 L534.8 327.0 L535.0 332.3 L535.2 308.1 L535.4 318.0 L535.6 324.6 L535.8 319.4 L536.0 311.4 L536.2 333.2 L536.4 328.4 L536.6 319.3 L536.8 318.7 L537.0 309.8 L537.2 320.0 L537.4 330.1 L537.6 306.4 L537.8 310.3 L538.0 333.9 L538.2 309.6 L538.4 333.3 L538.6 315.2 L538.8 326.7 L539.0 318.9 L539.2 318.1 L539.4 315.9 L539.6 305.8 L539.8 304.8 L540.0 330.7 L540.2 310.4 L540.4 304.8 L540.6 314.5 L540.8 302.0 L541.0 321.3 L541.2 304.3 L541.4 322.5 L541.6 312.0 L541.8 311.7 L542.0 324.3 L542.2 314.6 L542.4 330.7 L542.6 319.0 L542.8 313.4 L543.0 324.3 L543.2 316.5 L543.4 327.8 L543.6 314.7 L543.8 313.2 L544.0 315.9 L544.2 320.1 L544.4 320.8 L544.6 312.9 L544.8 308.5 L545.0 299.3 L545.2 322.2 L545.4 304.8 L545.6 313.5 L545.8 316.3 L546.0 330.5 L546.2 319.4 L546.4 322.0 L546.6 310.5 L546.8 327.1 L547.0 320.5 L547.2 314.3 L547.4 329.3 L547.6 317.7 L547.8 312.1 L548.0 331.1 L548.2 326.5 L548.4 330.8 L548.6 315.0 L548.8 325.5 L549.0 311.2 L549.2 303.6 L549.4 314.7 L549.6 330.1 L549.8 330.1 L550.0 317.9 L550.2 315.8 L550.4 305.2 L550.6 325.1 L550.8 308.1 L551.0 330.6 L551.2 330.7 L551.4 318.1 L551.6 321.5 L551.8 326.6 L552.0 312.2 L552.2 312.9 L552.4 337.1 L552.6 336.2 L552.8 330.5 L553.0 312.0 L553.2 326.7 L553.4 328.2 L553.6 336.1 L553.8 317.3 L554.0 340.3 L554.2 326.9 L554.4 328.5 L554.6 317.6 L554.8 339.7 L555.0 335.0 L555.2 328.9 L555.4 311.2 L555.6 327.0 L555.8 326.2 L556.0 335.7 L556.2 310.9 L556.4 337.7 L556.6 310.3 L556.8 341.2 L557.0 336.8 L557.2 340.0 L557.4 319.0 L557.6 324.4 L557.8 316.2 L558.0 315.9 L558.2 336.1 L558.4 320.3 L558.6 312.4 L558.8 323.4 L559.0 322.2 L559.2 321.5 L559.4 336.6 L559.6 340.0 L559.8 313.8 L560.0 342.9 L560.2 327.3 L560.4 314.6 L560.6 318.8 L560.8 311.8 L561.0 315.0 L561.2 319.2 L561.4 343.1 L561.6 322.5 L561.8 329.7 L562.0 338.5 L562.2 344.6 L562.4 338.7 L562.6 313.2 L562.8 325.7 L563.0 314.1 L563.2 322.2 L563.4 325.3 L563.6 319.6 L563.8 334.0 L564.0 307.7 L564.2 340.9 L564.4 312.2 L564.6 328.0 L564.8 314.6 L565.0 306.2 L565.2 317.2 L565.4 331.2 L565.6 303.9 L565.8 308.1 L566.0 327.2 L566.2 315.3 L566.4 340.3 L566.6 313.0 L566.8 316.3 L567.0 338.9 L567.2 319.4 L567.4 327.7 L567.6 322.8 L567.8 331.9 L568.0 316.7 L568.2 311.3 L568.4 334.4 L568.6 320.0 L568.8 321.6 L569.0 332.0 L569.2 310.8 L569.4 338.3 L569.6 318.8 L569.8 332.2 L570.0 337.3 L570.2 335.2 L570.4 330.9 L570.6 340.5 L570.8 316.9 L571.0 337.1 L571.2 327.3 L571.4 340.8 L571.6 322.9 L571.8 329.0 L572.0 326.0 L572.2 339.9 L572.4 326.6 L572.6 336.2 L572.8 318.7 L573.0 325.9 L573.2 337.2 L573.4 328.1 L573.6 335.8 L573.8 314.4 L574.0 310.9 L574.2 311.7 L574.4 337.0 L574.6 315.8 L574.8 329.3 L575.0 312.0 L575.2 339.8 L575.4 309.1 L575.6 338.2 L575.8 306.7 L576.0 337.8 L576.2 325.2 L576.4 337.9 L576.6 326.9 L576.8 318.0 L577.0 340.6 L577.2 333.8 L577.4 325.6" fill="none" stroke="#ff1e1e" stroke-width="0.95" stroke-linejoin="bevel"/>
<path d="M311.3 138 L312.7 112.5 L314.2 140" fill="none" stroke="#e02020" stroke-width="0.9"/>
<path d="M375 208 L378 203 L380.5 196 L382 190 L383.5 181 L385 170 L386.3 159.5 L387.3 168 L388.5 182 L390 196 L392.5 212 Z" fill="#f41c1c" stroke="#ff2a2a" stroke-width="0.8"/></svg>
<div style="position:absolute;right:945px;top:33.04px;font-size:6.9px;line-height:8.28px;color:#48e0e2;white-space:nowrap;letter-spacing:-0.15px;-webkit-text-stroke:0.25px;">60.0</div>
<div style="position:absolute;right:945px;top:70.54px;font-size:6.9px;line-height:8.28px;color:#48e0e2;white-space:nowrap;letter-spacing:-0.15px;-webkit-text-stroke:0.25px;">50.0</div>
<div style="position:absolute;right:945px;top:108.04px;font-size:6.9px;line-height:8.28px;color:#48e0e2;white-space:nowrap;letter-spacing:-0.15px;-webkit-text-stroke:0.25px;">40.0</div>
<div style="position:absolute;right:945px;top:145.54px;font-size:6.9px;line-height:8.28px;color:#48e0e2;white-space:nowrap;letter-spacing:-0.15px;-webkit-text-stroke:0.25px;">30.0</div>
<div style="position:absolute;right:945px;top:183.04px;font-size:6.9px;line-height:8.28px;color:#48e0e2;white-space:nowrap;letter-spacing:-0.15px;-webkit-text-stroke:0.25px;">20.0</div>
<div style="position:absolute;right:945px;top:220.54px;font-size:6.9px;line-height:8.28px;color:#48e0e2;white-space:nowrap;letter-spacing:-0.15px;-webkit-text-stroke:0.25px;">10.0</div>
<div style="position:absolute;right:945px;top:258.04px;font-size:6.9px;line-height:8.28px;color:#48e0e2;white-space:nowrap;letter-spacing:-0.15px;-webkit-text-stroke:0.25px;">0.0</div>
<div style="position:absolute;right:945px;top:295.54px;font-size:6.9px;line-height:8.28px;color:#48e0e2;white-space:nowrap;letter-spacing:-0.15px;-webkit-text-stroke:0.25px;">-10.0</div>
<div style="position:absolute;right:945px;top:333.04px;font-size:6.9px;line-height:8.28px;color:#48e0e2;white-space:nowrap;letter-spacing:-0.15px;-webkit-text-stroke:0.25px;">-20.0</div>
<div style="position:absolute;right:945px;top:370.54px;font-size:6.9px;line-height:8.28px;color:#48e0e2;white-space:nowrap;letter-spacing:-0.15px;-webkit-text-stroke:0.25px;">-30.0</div>
<div style="position:absolute;right:945px;top:408.04px;font-size:6.9px;line-height:8.28px;color:#48e0e2;white-space:nowrap;letter-spacing:-0.15px;-webkit-text-stroke:0.25px;">-40.0</div>
<div style="position:absolute;left:-232.0px;width:600px;text-align:center;top:412.65px;font-size:6.7px;line-height:8.04px;color:#48e0e2;white-space:nowrap;-webkit-text-stroke:0.25px;">1</div>
<div style="position:absolute;left:-195.78609152162306px;width:600px;text-align:center;top:412.65px;font-size:6.7px;line-height:8.04px;color:#48e0e2;white-space:nowrap;-webkit-text-stroke:0.25px;">2</div>
<div style="position:absolute;left:-147.91390847837692px;width:600px;text-align:center;top:412.65px;font-size:6.7px;line-height:8.04px;color:#48e0e2;white-space:nowrap;-webkit-text-stroke:0.25px;">5</div>
<div style="position:absolute;left:-111.69999999999999px;width:600px;text-align:center;top:412.65px;font-size:6.7px;line-height:8.04px;color:#48e0e2;white-space:nowrap;-webkit-text-stroke:0.25px;">10</div>
<div style="position:absolute;left:-75.48609152162305px;width:600px;text-align:center;top:412.65px;font-size:6.7px;line-height:8.04px;color:#48e0e2;white-space:nowrap;-webkit-text-stroke:0.25px;">20</div>
<div style="position:absolute;left:-27.61390847837697px;width:600px;text-align:center;top:412.65px;font-size:6.7px;line-height:8.04px;color:#48e0e2;white-space:nowrap;-webkit-text-stroke:0.25px;">50</div>
<div style="position:absolute;left:8.600000000000023px;width:600px;text-align:center;top:412.65px;font-size:6.7px;line-height:8.04px;color:#48e0e2;white-space:nowrap;-webkit-text-stroke:0.25px;">100</div>
<div style="position:absolute;left:44.81390847837696px;width:600px;text-align:center;top:412.65px;font-size:6.7px;line-height:8.04px;color:#48e0e2;white-space:nowrap;-webkit-text-stroke:0.25px;">200</div>
<div style="position:absolute;left:92.68609152162304px;width:600px;text-align:center;top:412.65px;font-size:6.7px;line-height:8.04px;color:#48e0e2;white-space:nowrap;-webkit-text-stroke:0.25px;">500</div>
<div style="position:absolute;left:128.89999999999998px;width:600px;text-align:center;top:412.65px;font-size:6.7px;line-height:8.04px;color:#48e0e2;white-space:nowrap;-webkit-text-stroke:0.25px;">1k</div>
<div style="position:absolute;left:165.1139084783769px;width:600px;text-align:center;top:412.65px;font-size:6.7px;line-height:8.04px;color:#48e0e2;white-space:nowrap;-webkit-text-stroke:0.25px;">2k</div>
<div style="position:absolute;left:212.98609152162305px;width:600px;text-align:center;top:412.65px;font-size:6.7px;line-height:8.04px;color:#48e0e2;white-space:nowrap;-webkit-text-stroke:0.25px;">5k</div>
<div style="position:absolute;left:249.20000000000005px;width:600px;text-align:center;top:412.65px;font-size:6.7px;line-height:8.04px;color:#48e0e2;white-space:nowrap;-webkit-text-stroke:0.25px;">10k</div>
<div style="position:absolute;left:5.5px;width:600px;text-align:center;top:420.50px;font-size:6.6px;line-height:7.919999999999999px;color:#48e0e2;white-space:nowrap;-webkit-text-stroke:0.25px;">Frequency (Hz)</div>
<div style="position:absolute;left:4.5px;top:225px;width:0;height:0;"><div style="position:absolute;left:-40px;top:-4px;width:80px;text-align:center;font-size:6.6px;line-height:8px;-webkit-text-stroke:0.2px;color:#48e0e2;transform:rotate(-90deg) scaleX(0.97);white-space:nowrap;">Magnitude (dBV)</div></div>
<div style="position:absolute;left:0px;top:430px;width:4.5px;height:80px;background:linear-gradient(90deg,#2a1a10,#6a4a2a 60%,#1a1008);"></div>
<div style="position:absolute;left:4.5px;top:430px;width:576.5px;height:79px;background:#e4e4e4;"></div>
<div style="position:absolute;left:4.5px;top:430px;width:576.5px;height:11px;background:linear-gradient(#d6d6d6,#e2e2e2);"></div>
<div style="position:absolute;left:577.5px;top:430px;width:3.5px;height:79px;background:#d2d2d2;"></div>
<div style="position:absolute;left:581px;top:430px;width:4px;height:80px;background:#000;"></div>
<div style="position:absolute;left:4.5px;top:508.6px;width:576.5px;height:1.4px;background:#222;"></div>
<div style="position:absolute;left:15px;top:450.24px;font-size:6.0px;line-height:7.199999999999999px;color:#1a1a1a;white-space:nowrap;">Frequency Span:</div>
<div style="position:absolute;left:16px;top:459.2px;width:185.5px;height:8.2px;background:#fff;border-radius:2px;box-shadow:0 0 0 0.5px #cdcdcd, 0 0.5px 0.5px #bbb;"></div>
<div style="position:absolute;left:20.5px;top:460.00px;font-size:5.9px;line-height:7.08px;color:#222;white-space:nowrap;">17226.5 Hz</div>
<svg style="position:absolute;left:194.5px;top:460.2px" width="5" height="6.199999999999999" viewBox="0 0 5 6"><path d="M1 2.3 L2.5 0.9 L4 2.3 M1 3.7 L2.5 5.1 L4 3.7" fill="none" stroke="#333" stroke-width="0.6"/></svg>
<div style="position:absolute;left:15px;top:471.64px;font-size:6.0px;line-height:7.199999999999999px;color:#1a1a1a;white-space:nowrap;">Window Type:</div>
<div style="position:absolute;left:16px;top:480.9px;width:185.5px;height:8.0px;background:#fff;border-radius:2px;box-shadow:0 0 0 0.5px #cdcdcd, 0 0.5px 0.5px #bbb;"></div>
<div style="position:absolute;left:20.5px;top:481.60px;font-size:5.9px;line-height:7.08px;color:#222;white-space:nowrap;">Hann</div>
<svg style="position:absolute;left:194.5px;top:481.9px" width="5" height="6.0" viewBox="0 0 5 6"><path d="M1 2.3 L2.5 0.9 L4 2.3 M1 3.7 L2.5 5.1 L4 3.7" fill="none" stroke="#333" stroke-width="0.6"/></svg>
<div style="position:absolute;left:15px;top:493.44px;font-size:6.0px;line-height:7.199999999999999px;color:#1a1a1a;white-space:nowrap;">Average Type:</div>
<div style="position:absolute;left:16px;top:502px;width:185.5px;height:8.0px;background:#fff;border-radius:2px;box-shadow:0 0 0 0.5px #cdcdcd, 0 0.5px 0.5px #bbb;"></div>
<div style="position:absolute;left:20.5px;top:502.70px;font-size:5.9px;line-height:7.08px;color:#222;white-space:nowrap;">Exponential</div>
<svg style="position:absolute;left:194.5px;top:503px" width="5" height="6.0" viewBox="0 0 5 6"><path d="M1 2.3 L2.5 0.9 L4 2.3 M1 3.7 L2.5 5.1 L4 3.7" fill="none" stroke="#333" stroke-width="0.6"/></svg>
<div style="position:absolute;left:212.1px;top:438.3px;width:159.9px;height:7.6px;background:#fff;border-radius:2px;box-shadow:0 0 0 0.5px #cfcfcf, 0 0.5px 0.6px #b8b8b8;"></div>
<div style="position:absolute;left:-68.20000000000002px;width:600px;text-align:center;top:438.13px;font-size:6.2px;line-height:7.4399999999999995px;color:#222;white-space:nowrap;">Live Inputs</div>
<div style="position:absolute;left:251.5px;top:438.3px;width:20.5px;height:7.6px;background:#e0e0e0;"></div>
<div style="position:absolute;left:-38.25px;width:600px;text-align:center;top:438.13px;font-size:6.2px;line-height:7.4399999999999995px;color:#222;white-space:nowrap;">FFT</div>
<div style="position:absolute;left:-12.850000000000023px;width:600px;text-align:center;top:438.13px;font-size:6.2px;line-height:7.4399999999999995px;color:#222;white-space:nowrap;">Display</div>
<div style="position:absolute;left:18.400000000000034px;width:600px;text-align:center;top:438.13px;font-size:6.2px;line-height:7.4399999999999995px;color:#222;white-space:nowrap;">Cursors</div>
<div style="position:absolute;left:53.25px;width:600px;text-align:center;top:438.13px;font-size:6.2px;line-height:7.4399999999999995px;color:#222;white-space:nowrap;">Triggering</div>
<div style="position:absolute;left:215.6px;top:450.34px;font-size:6.0px;line-height:7.199999999999999px;color:#1a1a1a;white-space:nowrap;">Spectral Lines:</div>
<div style="position:absolute;left:215.6px;top:458.8px;width:162px;height:8.8px;background:#fff;border-radius:1px;box-shadow:0 0 0 0.5px #d0d0d0;"></div>
<div style="position:absolute;right:607.9px;top:459.90px;font-size:5.9px;line-height:7.08px;color:#222;white-space:nowrap;">34,453</div>
<svg style="position:absolute;left:370.6px;top:461.3px" width="5" height="4" viewBox="0 0 5 4"><path d="M1 1 L2.5 2.6 L4 1" fill="none" stroke="#333" stroke-width="0.6"/></svg>
<div style="position:absolute;left:215.6px;top:471.44px;font-size:6.0px;line-height:7.199999999999999px;color:#1a1a1a;white-space:nowrap;">Overlap:</div>
<div style="position:absolute;left:215.6px;top:480px;width:162px;height:9px;background:#fff;border-radius:1px;box-shadow:0 0 0 0.5px #d0d0d0;"></div>
<div style="position:absolute;right:599.9px;top:481.20px;font-size:5.9px;line-height:7.08px;color:#222;white-space:nowrap;">0.0%</div>
<div style="position:absolute;left:215.6px;top:493.64px;font-size:6.0px;line-height:7.199999999999999px;color:#1a1a1a;white-space:nowrap;">Averages:</div>
<div style="position:absolute;left:215.6px;top:501.8px;width:162px;height:9px;background:#fff;border-radius:1px;box-shadow:0 0 0 0.5px #d0d0d0;"></div>
<div style="position:absolute;right:599.9px;top:503.00px;font-size:5.9px;line-height:7.08px;color:#222;white-space:nowrap;">10</div>
<div style="position:absolute;left:393.3px;top:450.04px;font-size:6.0px;line-height:7.199999999999999px;color:#1a1a1a;white-space:nowrap;">Frequency Weighting:</div>
<div style="position:absolute;left:393.5px;top:459.4px;width:57.5px;height:8.0px;background:#fff;border-radius:2px;box-shadow:0 0 0 0.5px #cdcdcd, 0 0.5px 0.5px #bbb;"></div>
<div style="position:absolute;left:398.0px;top:460.10px;font-size:5.9px;line-height:7.08px;color:#222;white-space:nowrap;">Flat</div>
<svg style="position:absolute;left:444.0px;top:460.4px" width="5" height="6.0" viewBox="0 0 5 6"><path d="M1 2.3 L2.5 0.9 L4 2.3 M1 3.7 L2.5 5.1 L4 3.7" fill="none" stroke="#333" stroke-width="0.6"/></svg>
<div style="position:absolute;left:393.5px;top:471.0px;width:7px;height:7px;background:#fff;border-radius:1.5px;box-shadow:0 0 0 0.5px #c4c4c4;"></div>
<svg style="position:absolute;left:393.5px;top:471.0px" width="7" height="7" viewBox="0 0 7 7"><path d="M1.8 3.6 L3 5.2 L5.4 1.4" fill="none" stroke="#222" stroke-width="0.8"/></svg>
<div style="position:absolute;left:402.8px;top:471.14px;font-size:6.0px;line-height:7.199999999999999px;color:#222;white-space:nowrap;">Guardbanding</div>
<div style="position:absolute;left:393.5px;top:480.7px;width:7px;height:7px;background:#fff;border-radius:1.5px;box-shadow:0 0 0 0.5px #c4c4c4;"></div>
<svg style="position:absolute;left:393.5px;top:480.7px" width="7" height="7" viewBox="0 0 7 7"><path d="M1.8 3.6 L3 5.2 L5.4 1.4" fill="none" stroke="#222" stroke-width="0.8"/></svg>
<div style="position:absolute;left:402.8px;top:480.84px;font-size:6.0px;line-height:7.199999999999999px;color:#222;white-space:nowrap;">Digital Antialiasing</div>
<div style="position:absolute;left:775px;top:0.5px;width:201px;height:29.5px;background:linear-gradient(#f5f5f5,#f1f1f1);"></div>
<div style="position:absolute;left:778.5999999999999px;top:3.5999999999999996px;width:6.4px;height:6.4px;border-radius:50%;background:#dadada;box-shadow:inset 0 0 0 0.5px #cfcfcf"></div>
<div style="position:absolute;left:789.0999999999999px;top:3.5999999999999996px;width:6.4px;height:6.4px;border-radius:50%;background:#dadada;box-shadow:inset 0 0 0 0.5px #cfcfcf"></div>
<div style="position:absolute;left:799.5999999999999px;top:3.5999999999999996px;width:6.4px;height:6.4px;border-radius:50%;background:#dadada;box-shadow:inset 0 0 0 0.5px #cfcfcf"></div>
<div style="position:absolute;left:574px;width:600px;text-align:center;top:3.08px;font-size:7px;line-height:8.4px;color:#b8b8b8;white-space:nowrap;">Octave Band Analyzer</div>
<svg style="position:absolute;left:779.4000000000001px;top:14.2px" width="11.6" height="11.6" viewBox="0 0 12 12"><circle cx="6" cy="6" r="5.9" fill="#0f2464"/><circle cx="6" cy="6.1" r="4.9" fill="url(#bg1)"/><circle cx="6" cy="5.5" r="2" fill="none" stroke="#a8c0ee" stroke-width="0.9"/></svg>
<svg style="position:absolute;left:795.9000000000001px;top:14.2px" width="11.6" height="11.6" viewBox="0 0 12 12"><circle cx="6" cy="6" r="5.9" fill="#0f2464"/><circle cx="6" cy="6.1" r="4.9" fill="url(#bg1)"/><circle cx="3.8" cy="6.8" r="0.9" fill="#fff"/><circle cx="8.2" cy="5.6" r="0.9" fill="#fff"/><rect x="3.5" y="3.6" width="5" height="0.9" fill="#b8ccf3"/></svg>
<svg style="position:absolute;left:861.4000000000001px;top:14.2px" width="11.6" height="11.6" viewBox="0 0 12 12"><circle cx="6" cy="6" r="5.9" fill="#0f2464"/><circle cx="6" cy="6.1" r="4.9" fill="url(#bg1)"/><path d="M4.3 3 L8.8 6 L4.3 9 Z" fill="#e8f0ff"/></svg>
<svg style="position:absolute;left:877.8000000000001px;top:14.2px" width="11.6" height="11.6" viewBox="0 0 12 12"><circle cx="6" cy="6" r="5.9" fill="#0f2464"/><circle cx="6" cy="6.1" r="4.9" fill="url(#bg1)"/><rect x="3.2" y="7.3" width="5.6" height="1.1" fill="#a9c2f2"/><rect x="4.2" y="4.3" width="3.2" height="2.2" fill="#1a3a90"/><rect x="6.5" y="3.6" width="1.2" height="3" fill="#c8d8f8"/></svg>
<svg style="position:absolute;left:894.2px;top:14.2px" width="11.6" height="11.6" viewBox="0 0 12 12"><circle cx="6" cy="6" r="5.9" fill="#0f2464"/><circle cx="6" cy="6.1" r="4.9" fill="url(#bg1)"/><rect x="3.2" y="7.3" width="5.6" height="1.1" fill="#a9c2f2"/><rect x="4.4" y="4.6" width="3.6" height="1.8" fill="#1a3a90"/><rect x="4.6" y="3.8" width="1" height="2.6" fill="#c8d8f8"/></svg>
<svg style="position:absolute;left:959.5px;top:14.2px" width="11.6" height="11.6" viewBox="0 0 12 12"><circle cx="6" cy="6" r="5.9" fill="#0f2464"/><circle cx="6" cy="6.1" r="4.9" fill="url(#bg1)"/><path d="M4.5 4.6 C4.5 2.9 7.5 2.9 7.5 4.5 C7.5 5.6 6.1 5.7 6.1 7.2" fill="none" stroke="#b4cdf6" stroke-width="1.2"/><circle cx="6.1" cy="8.7" r="0.75" fill="#b4cdf6"/></svg>
<div style="position:absolute;left:775px;top:30.0px;width:201px;height:107px;background:#000;"></div>
<svg style="position:absolute;left:0;top:0" width="976" height="510" viewBox="0 0 976 510"><defs><linearGradient id="g0" x1="0" y1="37.2" x2="0" y2="120.2" gradientUnits="userSpaceOnUse"><stop offset="0.00" stop-color="rgb(236, 236, 64)"/><stop offset="0.06" stop-color="rgb(232, 234, 64)"/><stop offset="0.19" stop-color="rgb(176, 226, 48)"/><stop offset="0.31" stop-color="rgb(112, 226, 44)"/><stop offset="0.52" stop-color="rgb(36, 228, 36)"/><stop offset="0.70" stop-color="rgb(32, 196, 90)"/><stop offset="0.84" stop-color="rgb(32, 146, 176)"/><stop offset="0.95" stop-color="rgb(34, 96, 224)"/><stop offset="1.00" stop-color="rgb(34, 70, 226)"/></linearGradient></defs><line x1="807" y1="37.20" x2="968.5" y2="37.20" stroke="#3a3a3a" stroke-width="0.9"/><line x1="807" y1="41.15" x2="968.5" y2="41.15" stroke="#3a3a3a" stroke-width="0.9"/><line x1="807" y1="45.10" x2="968.5" y2="45.10" stroke="#3a3a3a" stroke-width="0.9"/><line x1="807" y1="49.06" x2="968.5" y2="49.06" stroke="#3a3a3a" stroke-width="0.9"/><line x1="807" y1="53.01" x2="968.5" y2="53.01" stroke="#3a3a3a" stroke-width="0.9"/><line x1="807" y1="56.96" x2="968.5" y2="56.96" stroke="#3a3a3a" stroke-width="0.9"/><line x1="807" y1="60.91" x2="968.5" y2="60.91" stroke="#3a3a3a" stroke-width="0.9"/><line x1="807" y1="64.87" x2="968.5" y2="64.87" stroke="#3a3a3a" stroke-width="0.9"/><line x1="807" y1="68.82" x2="968.5" y2="68.82" stroke="#3a3a3a" stroke-width="0.9"/><line x1="807" y1="72.77" x2="968.5" y2="72.77" stroke="#3a3a3a" stroke-width="0.9"/><line x1="807" y1="76.72" x2="968.5" y2="76.72" stroke="#3a3a3a" stroke-width="0.9"/><line x1="807" y1="80.68" x2="968.5" y2="80.68" stroke="#3a3a3a" stroke-width="0.9"/><line x1="807" y1="84.63" x2="968.5" y2="84.63" stroke="#3a3a3a" stroke-width="0.9"/><line x1="807" y1="88.58" x2="968.5" y2="88.58" stroke="#3a3a3a" stroke-width="0.9"/><line x1="807" y1="92.53" x2="968.5" y2="92.53" stroke="#3a3a3a" stroke-width="0.9"/><line x1="807" y1="96.49" x2="968.5" y2="96.49" stroke="#3a3a3a" stroke-width="0.9"/><line x1="807" y1="100.44" x2="968.5" y2="100.44" stroke="#3a3a3a" stroke-width="0.9"/><line x1="807" y1="104.39" x2="968.5" y2="104.39" stroke="#3a3a3a" stroke-width="0.9"/><line x1="807" y1="108.34" x2="968.5" y2="108.34" stroke="#3a3a3a" stroke-width="0.9"/><line x1="807" y1="112.30" x2="968.5" y2="112.30" stroke="#3a3a3a" stroke-width="0.9"/><line x1="807" y1="116.25" x2="968.5" y2="116.25" stroke="#3a3a3a" stroke-width="0.9"/><line x1="807" y1="120.20" x2="968.5" y2="120.20" stroke="#3a3a3a" stroke-width="0.9"/><line x1="968.5" y1="37.2" x2="968.5" y2="120.2" stroke="#3a3a3a" stroke-width="0.9"/><rect x="807" y="72.6" width="161.5" height="3.6000000000000085" fill="#0e1a78" fill-opacity="0.95"/><rect x="807.30" y="41.20" width="4.3" height="79.00" fill="url(#g0)"/><rect x="812.52" y="52.00" width="4.3" height="68.20" fill="url(#g0)"/><rect x="817.74" y="52.40" width="4.3" height="67.80" fill="url(#g0)"/><rect x="822.96" y="53.30" width="4.3" height="66.90" fill="url(#g0)"/><rect x="828.18" y="56.50" width="4.3" height="63.70" fill="url(#g0)"/><rect x="833.40" y="58.00" width="4.3" height="62.20" fill="url(#g0)"/><rect x="838.62" y="61.30" width="4.3" height="58.90" fill="url(#g0)"/><rect x="843.84" y="59.40" width="4.3" height="60.80" fill="url(#g0)"/><rect x="849.06" y="64.10" width="4.3" height="56.10" fill="url(#g0)"/><rect x="854.28" y="70.60" width="4.3" height="49.60" fill="url(#g0)"/><rect x="859.50" y="73.20" width="4.3" height="47.00" fill="url(#g0)"/><rect x="864.72" y="75.60" width="4.3" height="44.60" fill="url(#g0)"/><rect x="869.94" y="78.80" width="4.3" height="41.40" fill="url(#g0)"/><rect x="875.16" y="74.30" width="4.3" height="45.90" fill="url(#g0)"/><rect x="880.38" y="74.30" width="4.3" height="45.90" fill="url(#g0)"/><rect x="885.60" y="83.00" width="4.3" height="37.20" fill="url(#g0)"/><rect x="890.82" y="83.00" width="4.3" height="37.20" fill="url(#g0)"/><rect x="896.04" y="87.80" width="4.3" height="32.40" fill="url(#g0)"/><rect x="901.26" y="93.00" width="4.3" height="27.20" fill="url(#g0)"/><rect x="906.48" y="95.40" width="4.3" height="24.80" fill="url(#g0)"/><rect x="911.70" y="100.20" width="4.3" height="20.00" fill="url(#g0)"/><rect x="916.92" y="105.30" width="4.3" height="14.90" fill="url(#g0)"/><rect x="922.14" y="108.40" width="4.3" height="11.80" fill="url(#g0)"/><rect x="927.36" y="109.80" width="4.3" height="10.40" fill="url(#g0)"/><rect x="932.58" y="109.80" width="4.3" height="10.40" fill="url(#g0)"/><rect x="937.80" y="109.00" width="4.3" height="11.20" fill="url(#g0)"/><rect x="943.02" y="108.40" width="4.3" height="11.80" fill="url(#g0)"/><rect x="948.24" y="108.40" width="4.3" height="11.80" fill="url(#g0)"/><rect x="953.46" y="108.40" width="4.3" height="11.80" fill="url(#g0)"/><rect x="958.68" y="107.80" width="4.3" height="12.40" fill="url(#g0)"/><line x1="807" y1="41.15" x2="966" y2="41.15" stroke="#000" stroke-opacity="0.42" stroke-width="0.8"/><line x1="807" y1="45.10" x2="966" y2="45.10" stroke="#000" stroke-opacity="0.42" stroke-width="0.8"/><line x1="807" y1="49.06" x2="966" y2="49.06" stroke="#000" stroke-opacity="0.42" stroke-width="0.8"/><line x1="807" y1="53.01" x2="966" y2="53.01" stroke="#000" stroke-opacity="0.42" stroke-width="0.8"/><line x1="807" y1="56.96" x2="966" y2="56.96" stroke="#000" stroke-opacity="0.42" stroke-width="0.8"/><line x1="807" y1="60.91" x2="966" y2="60.91" stroke="#000" stroke-opacity="0.42" stroke-width="0.8"/><line x1="807" y1="64.87" x2="966" y2="64.87" stroke="#000" stroke-opacity="0.42" stroke-width="0.8"/><line x1="807" y1="68.82" x2="966" y2="68.82" stroke="#000" stroke-opacity="0.42" stroke-width="0.8"/><line x1="807" y1="72.77" x2="966" y2="72.77" stroke="#000" stroke-opacity="0.42" stroke-width="0.8"/><line x1="807" y1="76.72" x2="966" y2="76.72" stroke="#000" stroke-opacity="0.42" stroke-width="0.8"/><line x1="807" y1="80.68" x2="966" y2="80.68" stroke="#000" stroke-opacity="0.42" stroke-width="0.8"/><line x1="807" y1="84.63" x2="966" y2="84.63" stroke="#000" stroke-opacity="0.42" stroke-width="0.8"/><line x1="807" y1="88.58" x2="966" y2="88.58" stroke="#000" stroke-opacity="0.42" stroke-width="0.8"/><line x1="807" y1="92.53" x2="966" y2="92.53" stroke="#000" stroke-opacity="0.42" stroke-width="0.8"/><line x1="807" y1="96.49" x2="966" y2="96.49" stroke="#000" stroke-opacity="0.42" stroke-width="0.8"/><line x1="807" y1="100.44" x2="966" y2="100.44" stroke="#000" stroke-opacity="0.42" stroke-width="0.8"/><line x1="807" y1="104.39" x2="966" y2="104.39" stroke="#000" stroke-opacity="0.42" stroke-width="0.8"/><line x1="807" y1="108.34" x2="966" y2="108.34" stroke="#000" stroke-opacity="0.42" stroke-width="0.8"/><line x1="807" y1="112.30" x2="966" y2="112.30" stroke="#000" stroke-opacity="0.42" stroke-width="0.8"/><line x1="807" y1="116.25" x2="966" y2="116.25" stroke="#000" stroke-opacity="0.42" stroke-width="0.8"/><line x1="807" y1="73.20" x2="968" y2="73.20" stroke="#000" stroke-opacity="0.35" stroke-width="1"/><line x1="877.3" y1="37.2" x2="877.3" y2="120.2" stroke="#2030c0" stroke-opacity="0.75" stroke-width="1.8"/></svg>
<div style="position:absolute;right:170px;top:33.09px;font-size:6.8px;line-height:8.16px;color:#3be3ea;white-space:nowrap;-webkit-text-stroke:0.15px;">60.0</div>
<div style="position:absolute;right:170px;top:41.39px;font-size:6.8px;line-height:8.16px;color:#3be3ea;white-space:nowrap;-webkit-text-stroke:0.15px;">55.0</div>
<div style="position:absolute;right:170px;top:49.69px;font-size:6.8px;line-height:8.16px;color:#3be3ea;white-space:nowrap;-webkit-text-stroke:0.15px;">50.0</div>
<div style="position:absolute;right:170px;top:57.99px;font-size:6.8px;line-height:8.16px;color:#3be3ea;white-space:nowrap;-webkit-text-stroke:0.15px;">45.0</div>
<div style="position:absolute;right:170px;top:66.29px;font-size:6.8px;line-height:8.16px;color:#3be3ea;white-space:nowrap;-webkit-text-stroke:0.15px;">40.0</div>
<div style="position:absolute;right:170px;top:74.59px;font-size:6.8px;line-height:8.16px;color:#3be3ea;white-space:nowrap;-webkit-text-stroke:0.15px;">35.0</div>
<div style="position:absolute;right:170px;top:82.89px;font-size:6.8px;line-height:8.16px;color:#3be3ea;white-space:nowrap;-webkit-text-stroke:0.15px;">30.0</div>
<div style="position:absolute;right:170px;top:91.19px;font-size:6.8px;line-height:8.16px;color:#3be3ea;white-space:nowrap;-webkit-text-stroke:0.15px;">25.0</div>
<div style="position:absolute;right:170px;top:99.49px;font-size:6.8px;line-height:8.16px;color:#3be3ea;white-space:nowrap;-webkit-text-stroke:0.15px;">20.0</div>
<div style="position:absolute;right:170px;top:107.79px;font-size:6.8px;line-height:8.16px;color:#3be3ea;white-space:nowrap;-webkit-text-stroke:0.15px;">15.0</div>
<div style="position:absolute;right:170px;top:116.09px;font-size:6.8px;line-height:8.16px;color:#3be3ea;white-space:nowrap;-webkit-text-stroke:0.15px;">10.0</div>
<div style="position:absolute;left:521px;width:600px;text-align:center;top:119.99px;font-size:6.8px;line-height:8.16px;color:#3be3ea;white-space:nowrap;-webkit-text-stroke:0.15px;">31.3</div>
<div style="position:absolute;left:535px;width:600px;text-align:center;top:119.99px;font-size:6.8px;line-height:8.16px;color:#3be3ea;white-space:nowrap;-webkit-text-stroke:0.15px;">63</div>
<div style="position:absolute;left:551px;width:600px;text-align:center;top:119.99px;font-size:6.8px;line-height:8.16px;color:#3be3ea;white-space:nowrap;-webkit-text-stroke:0.15px;">125</div>
<div style="position:absolute;left:566.6px;width:600px;text-align:center;top:119.99px;font-size:6.8px;line-height:8.16px;color:#3be3ea;white-space:nowrap;-webkit-text-stroke:0.15px;">250</div>
<div style="position:absolute;left:582px;width:600px;text-align:center;top:119.99px;font-size:6.8px;line-height:8.16px;color:#3be3ea;white-space:nowrap;-webkit-text-stroke:0.15px;">500</div>
<div style="position:absolute;left:598px;width:600px;text-align:center;top:119.99px;font-size:6.8px;line-height:8.16px;color:#3be3ea;white-space:nowrap;-webkit-text-stroke:0.15px;">1 k</div>
<div style="position:absolute;left:613.6px;width:600px;text-align:center;top:119.99px;font-size:6.8px;line-height:8.16px;color:#3be3ea;white-space:nowrap;-webkit-text-stroke:0.15px;">2 k</div>
<div style="position:absolute;left:629px;width:600px;text-align:center;top:119.99px;font-size:6.8px;line-height:8.16px;color:#3be3ea;white-space:nowrap;-webkit-text-stroke:0.15px;">4 k</div>
<div style="position:absolute;left:644.6px;width:600px;text-align:center;top:119.99px;font-size:6.8px;line-height:8.16px;color:#3be3ea;white-space:nowrap;-webkit-text-stroke:0.15px;">8 k</div>
<div style="position:absolute;left:662px;width:600px;text-align:center;top:119.99px;font-size:6.8px;line-height:8.16px;color:#3be3ea;white-space:nowrap;-webkit-text-stroke:0.15px;">16 k</div>
<div style="position:absolute;left:588px;width:600px;text-align:center;top:127.92px;font-size:6.4px;line-height:7.68px;color:#3be3ea;white-space:nowrap;-webkit-text-stroke:0.15px;">Frequency (Hz)</div>
<div style="position:absolute;left:779.5px;top:77.0px;width:0;height:0;"><div style="position:absolute;left:-40px;top:-4px;width:80px;text-align:center;font-size:7px;line-height:8px;-webkit-text-stroke:0.15px;color:#3be3ea;transform:rotate(-90deg) scaleX(0.8);white-space:nowrap;">Magnitude (dBV)</div></div>
<div style="position:absolute;left:775px;top:137.0px;width:201px;height:33px;background:#e6e6e6;"></div>
<div style="position:absolute;left:775px;top:137.0px;width:4.2px;height:33px;background:linear-gradient(90deg,#1a1a1a,#4a4a4a);"></div>
<div style="position:absolute;left:970.6px;top:137.0px;width:5.4px;height:33px;background:#d4d4d4;"></div>
<div style="position:absolute;left:779px;top:137.0px;width:191.6px;height:9px;background:linear-gradient(#d8d8d8,#e6e6e6);"></div>
<div style="position:absolute;left:801.8px;top:145.7px;width:145.8px;height:7.6px;background:#fff;border-radius:2px;box-shadow:0 0 0 0.5px #cfcfcf, 0 0.5px 0.6px #b8b8b8;"></div>
<div style="position:absolute;left:519.3px;width:600px;text-align:center;top:145.53px;font-size:6.2px;line-height:7.4399999999999995px;color:#222;white-space:nowrap;">Live Input</div>
<div style="position:absolute;left:836.8px;top:145.7px;width:49.5px;height:7.6px;background:#e0e0e0;"></div>
<div style="position:absolute;left:561.55px;width:600px;text-align:center;top:145.53px;font-size:6.2px;line-height:7.4399999999999995px;color:#222;white-space:nowrap;">Measurement</div>
<div style="position:absolute;left:601.55px;width:600px;text-align:center;top:145.53px;font-size:6.2px;line-height:7.4399999999999995px;color:#222;white-space:nowrap;">Display</div>
<div style="position:absolute;left:632.1999999999999px;width:600px;text-align:center;top:145.53px;font-size:6.2px;line-height:7.4399999999999995px;color:#222;white-space:nowrap;">Cursors</div>
<div style="position:absolute;left:789.8px;top:159.67px;font-size:6.3px;line-height:7.56px;color:#222;white-space:nowrap;">Bandwidth:</div>
<div style="position:absolute;right:65px;top:159.67px;font-size:6.3px;line-height:7.56px;color:#222;white-space:nowrap;transform:scaleX(0.93);transform-origin:100% 50%;">Frequency Weighting:</div>
<div style="position:absolute;left:916.7px;top:159.7px;width:40.3px;height:7.6px;background:#fff;border-radius:2px;box-shadow:0 0 0 0.5px #cdcdcd, 0 0.5px 0.5px #bbb;"></div>
<div style="position:absolute;left:921.2px;top:160.20px;font-size:5.9px;line-height:7.08px;color:#222;white-space:nowrap;">Flat</div>
<svg style="position:absolute;left:950.0px;top:160.7px" width="5" height="5.6" viewBox="0 0 5 6"><path d="M1 2.3 L2.5 0.9 L4 2.3 M1 3.7 L2.5 5.1 L4 3.7" fill="none" stroke="#333" stroke-width="0.6"/></svg>
<div style="position:absolute;left:775px;top:169px;width:201px;height:29.5px;background:linear-gradient(#f5f5f5,#f1f1f1);"></div>
<div style="position:absolute;left:778.5999999999999px;top:172.10000000000002px;width:6.4px;height:6.4px;border-radius:50%;background:#dadada;box-shadow:inset 0 0 0 0.5px #cfcfcf"></div>
<div style="position:absolute;left:789.0999999999999px;top:172.10000000000002px;width:6.4px;height:6.4px;border-radius:50%;background:#dadada;box-shadow:inset 0 0 0 0.5px #cfcfcf"></div>
<div style="position:absolute;left:799.5999999999999px;top:172.10000000000002px;width:6.4px;height:6.4px;border-radius:50%;background:#dadada;box-shadow:inset 0 0 0 0.5px #cfcfcf"></div>
<div style="position:absolute;left:574px;width:600px;text-align:center;top:171.58px;font-size:7px;line-height:8.4px;color:#b8b8b8;white-space:nowrap;">Octave Band Analyzer 2</div>
<svg style="position:absolute;left:779.4000000000001px;top:182.7px" width="11.6" height="11.6" viewBox="0 0 12 12"><circle cx="6" cy="6" r="5.9" fill="#0f2464"/><circle cx="6" cy="6.1" r="4.9" fill="url(#bg1)"/><circle cx="6" cy="5.5" r="2" fill="none" stroke="#a8c0ee" stroke-width="0.9"/></svg>
<svg style="position:absolute;left:795.9000000000001px;top:182.7px" width="11.6" height="11.6" viewBox="0 0 12 12"><circle cx="6" cy="6" r="5.9" fill="#0f2464"/><circle cx="6" cy="6.1" r="4.9" fill="url(#bg1)"/><circle cx="3.8" cy="6.8" r="0.9" fill="#fff"/><circle cx="8.2" cy="5.6" r="0.9" fill="#fff"/><rect x="3.5" y="3.6" width="5" height="0.9" fill="#b8ccf3"/></svg>
<svg style="position:absolute;left:861.4000000000001px;top:182.7px" width="11.6" height="11.6" viewBox="0 0 12 12"><circle cx="6" cy="6" r="5.9" fill="#0f2464"/><circle cx="6" cy="6.1" r="4.9" fill="url(#bg1)"/><path d="M4.3 3 L8.8 6 L4.3 9 Z" fill="#e8f0ff"/></svg>
<svg style="position:absolute;left:877.8000000000001px;top:182.7px" width="11.6" height="11.6" viewBox="0 0 12 12"><circle cx="6" cy="6" r="5.9" fill="#0f2464"/><circle cx="6" cy="6.1" r="4.9" fill="url(#bg1)"/><rect x="3.2" y="7.3" width="5.6" height="1.1" fill="#a9c2f2"/><rect x="4.2" y="4.3" width="3.2" height="2.2" fill="#1a3a90"/><rect x="6.5" y="3.6" width="1.2" height="3" fill="#c8d8f8"/></svg>
<svg style="position:absolute;left:894.2px;top:182.7px" width="11.6" height="11.6" viewBox="0 0 12 12"><circle cx="6" cy="6" r="5.9" fill="#0f2464"/><circle cx="6" cy="6.1" r="4.9" fill="url(#bg1)"/><rect x="3.2" y="7.3" width="5.6" height="1.1" fill="#a9c2f2"/><rect x="4.4" y="4.6" width="3.6" height="1.8" fill="#1a3a90"/><rect x="4.6" y="3.8" width="1" height="2.6" fill="#c8d8f8"/></svg>
<svg style="position:absolute;left:959.5px;top:182.7px" width="11.6" height="11.6" viewBox="0 0 12 12"><circle cx="6" cy="6" r="5.9" fill="#0f2464"/><circle cx="6" cy="6.1" r="4.9" fill="url(#bg1)"/><path d="M4.5 4.6 C4.5 2.9 7.5 2.9 7.5 4.5 C7.5 5.6 6.1 5.7 6.1 7.2" fill="none" stroke="#b4cdf6" stroke-width="1.2"/><circle cx="6.1" cy="8.7" r="0.75" fill="#b4cdf6"/></svg>
<div style="position:absolute;left:775px;top:198.5px;width:201px;height:107px;background:#000;"></div>
<svg style="position:absolute;left:0;top:0" width="976" height="510" viewBox="0 0 976 510"><defs><linearGradient id="g169" x1="0" y1="205.7" x2="0" y2="288.7" gradientUnits="userSpaceOnUse"><stop offset="0.00" stop-color="rgb(236, 236, 64)"/><stop offset="0.06" stop-color="rgb(232, 234, 64)"/><stop offset="0.19" stop-color="rgb(176, 226, 48)"/><stop offset="0.31" stop-color="rgb(112, 226, 44)"/><stop offset="0.52" stop-color="rgb(36, 228, 36)"/><stop offset="0.70" stop-color="rgb(32, 196, 90)"/><stop offset="0.84" stop-color="rgb(32, 146, 176)"/><stop offset="0.95" stop-color="rgb(34, 96, 224)"/><stop offset="1.00" stop-color="rgb(34, 70, 226)"/></linearGradient></defs><line x1="807" y1="205.70" x2="968.5" y2="205.70" stroke="#3a3a3a" stroke-width="0.9"/><line x1="807" y1="209.65" x2="968.5" y2="209.65" stroke="#3a3a3a" stroke-width="0.9"/><line x1="807" y1="213.60" x2="968.5" y2="213.60" stroke="#3a3a3a" stroke-width="0.9"/><line x1="807" y1="217.56" x2="968.5" y2="217.56" stroke="#3a3a3a" stroke-width="0.9"/><line x1="807" y1="221.51" x2="968.5" y2="221.51" stroke="#3a3a3a" stroke-width="0.9"/><line x1="807" y1="225.46" x2="968.5" y2="225.46" stroke="#3a3a3a" stroke-width="0.9"/><line x1="807" y1="229.41" x2="968.5" y2="229.41" stroke="#3a3a3a" stroke-width="0.9"/><line x1="807" y1="233.37" x2="968.5" y2="233.37" stroke="#3a3a3a" stroke-width="0.9"/><line x1="807" y1="237.32" x2="968.5" y2="237.32" stroke="#3a3a3a" stroke-width="0.9"/><line x1="807" y1="241.27" x2="968.5" y2="241.27" stroke="#3a3a3a" stroke-width="0.9"/><line x1="807" y1="245.22" x2="968.5" y2="245.22" stroke="#3a3a3a" stroke-width="0.9"/><line x1="807" y1="249.18" x2="968.5" y2="249.18" stroke="#3a3a3a" stroke-width="0.9"/><line x1="807" y1="253.13" x2="968.5" y2="253.13" stroke="#3a3a3a" stroke-width="0.9"/><line x1="807" y1="257.08" x2="968.5" y2="257.08" stroke="#3a3a3a" stroke-width="0.9"/><line x1="807" y1="261.03" x2="968.5" y2="261.03" stroke="#3a3a3a" stroke-width="0.9"/><line x1="807" y1="264.99" x2="968.5" y2="264.99" stroke="#3a3a3a" stroke-width="0.9"/><line x1="807" y1="268.94" x2="968.5" y2="268.94" stroke="#3a3a3a" stroke-width="0.9"/><line x1="807" y1="272.89" x2="968.5" y2="272.89" stroke="#3a3a3a" stroke-width="0.9"/><line x1="807" y1="276.84" x2="968.5" y2="276.84" stroke="#3a3a3a" stroke-width="0.9"/><line x1="807" y1="280.80" x2="968.5" y2="280.80" stroke="#3a3a3a" stroke-width="0.9"/><line x1="807" y1="284.75" x2="968.5" y2="284.75" stroke="#3a3a3a" stroke-width="0.9"/><line x1="807" y1="288.70" x2="968.5" y2="288.70" stroke="#3a3a3a" stroke-width="0.9"/><line x1="968.5" y1="205.7" x2="968.5" y2="288.7" stroke="#3a3a3a" stroke-width="0.9"/><rect x="807" y="229" width="161.5" height="5" fill="#0e1a78" fill-opacity="0.95"/><rect x="807.30" y="209.40" width="4.3" height="79.30" fill="url(#g169)"/><rect x="812.52" y="217.40" width="4.3" height="71.30" fill="url(#g169)"/><rect x="817.74" y="215.00" width="4.3" height="73.70" fill="url(#g169)"/><rect x="822.96" y="214.00" width="4.3" height="74.70" fill="url(#g169)"/><rect x="828.18" y="217.00" width="4.3" height="71.70" fill="url(#g169)"/><rect x="833.40" y="218.00" width="4.3" height="70.70" fill="url(#g169)"/><rect x="838.62" y="219.60" width="4.3" height="69.10" fill="url(#g169)"/><rect x="843.84" y="218.00" width="4.3" height="70.70" fill="url(#g169)"/><rect x="849.06" y="222.40" width="4.3" height="66.30" fill="url(#g169)"/><rect x="854.28" y="229.00" width="4.3" height="59.70" fill="url(#g169)"/><rect x="859.50" y="232.00" width="4.3" height="56.70" fill="url(#g169)"/><rect x="864.72" y="234.00" width="4.3" height="54.70" fill="url(#g169)"/><rect x="869.94" y="237.40" width="4.3" height="51.30" fill="url(#g169)"/><rect x="875.16" y="232.00" width="4.3" height="56.70" fill="url(#g169)"/><rect x="880.38" y="232.00" width="4.3" height="56.70" fill="url(#g169)"/><rect x="885.60" y="241.00" width="4.3" height="47.70" fill="url(#g169)"/><rect x="890.82" y="240.60" width="4.3" height="48.10" fill="url(#g169)"/><rect x="896.04" y="246.00" width="4.3" height="42.70" fill="url(#g169)"/><rect x="901.26" y="251.00" width="4.3" height="37.70" fill="url(#g169)"/><rect x="906.48" y="253.00" width="4.3" height="35.70" fill="url(#g169)"/><rect x="911.70" y="258.00" width="4.3" height="30.70" fill="url(#g169)"/><rect x="916.92" y="263.00" width="4.3" height="25.70" fill="url(#g169)"/><rect x="922.14" y="267.40" width="4.3" height="21.30" fill="url(#g169)"/><rect x="927.36" y="268.60" width="4.3" height="20.10" fill="url(#g169)"/><rect x="932.58" y="270.00" width="4.3" height="18.70" fill="url(#g169)"/><rect x="937.80" y="271.00" width="4.3" height="17.70" fill="url(#g169)"/><rect x="943.02" y="273.00" width="4.3" height="15.70" fill="url(#g169)"/><rect x="948.24" y="276.40" width="4.3" height="12.30" fill="url(#g169)"/><rect x="953.46" y="282.40" width="4.3" height="6.30" fill="url(#g169)"/><line x1="807" y1="209.65" x2="966" y2="209.65" stroke="#000" stroke-opacity="0.42" stroke-width="0.8"/><line x1="807" y1="213.60" x2="966" y2="213.60" stroke="#000" stroke-opacity="0.42" stroke-width="0.8"/><line x1="807" y1="217.56" x2="966" y2="217.56" stroke="#000" stroke-opacity="0.42" stroke-width="0.8"/><line x1="807" y1="221.51" x2="966" y2="221.51" stroke="#000" stroke-opacity="0.42" stroke-width="0.8"/><line x1="807" y1="225.46" x2="966" y2="225.46" stroke="#000" stroke-opacity="0.42" stroke-width="0.8"/><line x1="807" y1="229.41" x2="966" y2="229.41" stroke="#000" stroke-opacity="0.42" stroke-width="0.8"/><line x1="807" y1="233.37" x2="966" y2="233.37" stroke="#000" stroke-opacity="0.42" stroke-width="0.8"/><line x1="807" y1="237.32" x2="966" y2="237.32" stroke="#000" stroke-opacity="0.42" stroke-width="0.8"/><line x1="807" y1="241.27" x2="966" y2="241.27" stroke="#000" stroke-opacity="0.42" stroke-width="0.8"/><line x1="807" y1="245.22" x2="966" y2="245.22" stroke="#000" stroke-opacity="0.42" stroke-width="0.8"/><line x1="807" y1="249.18" x2="966" y2="249.18" stroke="#000" stroke-opacity="0.42" stroke-width="0.8"/><line x1="807" y1="253.13" x2="966" y2="253.13" stroke="#000" stroke-opacity="0.42" stroke-width="0.8"/><line x1="807" y1="257.08" x2="966" y2="257.08" stroke="#000" stroke-opacity="0.42" stroke-width="0.8"/><line x1="807" y1="261.03" x2="966" y2="261.03" stroke="#000" stroke-opacity="0.42" stroke-width="0.8"/><line x1="807" y1="264.99" x2="966" y2="264.99" stroke="#000" stroke-opacity="0.42" stroke-width="0.8"/><line x1="807" y1="268.94" x2="966" y2="268.94" stroke="#000" stroke-opacity="0.42" stroke-width="0.8"/><line x1="807" y1="272.89" x2="966" y2="272.89" stroke="#000" stroke-opacity="0.42" stroke-width="0.8"/><line x1="807" y1="276.84" x2="966" y2="276.84" stroke="#000" stroke-opacity="0.42" stroke-width="0.8"/><line x1="807" y1="280.80" x2="966" y2="280.80" stroke="#000" stroke-opacity="0.42" stroke-width="0.8"/><line x1="807" y1="284.75" x2="966" y2="284.75" stroke="#000" stroke-opacity="0.42" stroke-width="0.8"/><line x1="807" y1="229.60" x2="968" y2="229.60" stroke="#000" stroke-opacity="0.35" stroke-width="1"/><line x1="877.3" y1="205.7" x2="877.3" y2="288.7" stroke="#2030c0" stroke-opacity="0.75" stroke-width="1.8"/></svg>
<div style="position:absolute;right:170px;top:201.59px;font-size:6.8px;line-height:8.16px;color:#3be3ea;white-space:nowrap;-webkit-text-stroke:0.15px;">54.0</div>
<div style="position:absolute;right:170px;top:209.89px;font-size:6.8px;line-height:8.16px;color:#3be3ea;white-space:nowrap;-webkit-text-stroke:0.15px;">49.0</div>
<div style="position:absolute;right:170px;top:218.19px;font-size:6.8px;line-height:8.16px;color:#3be3ea;white-space:nowrap;-webkit-text-stroke:0.15px;">44.0</div>
<div style="position:absolute;right:170px;top:226.49px;font-size:6.8px;line-height:8.16px;color:#3be3ea;white-space:nowrap;-webkit-text-stroke:0.15px;">39.0</div>
<div style="position:absolute;right:170px;top:234.79px;font-size:6.8px;line-height:8.16px;color:#3be3ea;white-space:nowrap;-webkit-text-stroke:0.15px;">34.0</div>
<div style="position:absolute;right:170px;top:243.09px;font-size:6.8px;line-height:8.16px;color:#3be3ea;white-space:nowrap;-webkit-text-stroke:0.15px;">29.0</div>
<div style="position:absolute;right:170px;top:251.39px;font-size:6.8px;line-height:8.16px;color:#3be3ea;white-space:nowrap;-webkit-text-stroke:0.15px;">24.0</div>
<div style="position:absolute;right:170px;top:259.69px;font-size:6.8px;line-height:8.16px;color:#3be3ea;white-space:nowrap;-webkit-text-stroke:0.15px;">19.0</div>
<div style="position:absolute;right:170px;top:267.99px;font-size:6.8px;line-height:8.16px;color:#3be3ea;white-space:nowrap;-webkit-text-stroke:0.15px;">14.0</div>
<div style="position:absolute;right:170px;top:276.29px;font-size:6.8px;line-height:8.16px;color:#3be3ea;white-space:nowrap;-webkit-text-stroke:0.15px;">9.0</div>
<div style="position:absolute;right:170px;top:284.59px;font-size:6.8px;line-height:8.16px;color:#3be3ea;white-space:nowrap;-webkit-text-stroke:0.15px;">4.0</div>
<div style="position:absolute;left:521px;width:600px;text-align:center;top:288.49px;font-size:6.8px;line-height:8.16px;color:#3be3ea;white-space:nowrap;-webkit-text-stroke:0.15px;">31.3</div>
<div style="position:absolute;left:535px;width:600px;text-align:center;top:288.49px;font-size:6.8px;line-height:8.16px;color:#3be3ea;white-space:nowrap;-webkit-text-stroke:0.15px;">63</div>
<div style="position:absolute;left:551px;width:600px;text-align:center;top:288.49px;font-size:6.8px;line-height:8.16px;color:#3be3ea;white-space:nowrap;-webkit-text-stroke:0.15px;">125</div>
<div style="position:absolute;left:566.6px;width:600px;text-align:center;top:288.49px;font-size:6.8px;line-height:8.16px;color:#3be3ea;white-space:nowrap;-webkit-text-stroke:0.15px;">250</div>
<div style="position:absolute;left:582px;width:600px;text-align:center;top:288.49px;font-size:6.8px;line-height:8.16px;color:#3be3ea;white-space:nowrap;-webkit-text-stroke:0.15px;">500</div>
<div style="position:absolute;left:598px;width:600px;text-align:center;top:288.49px;font-size:6.8px;line-height:8.16px;color:#3be3ea;white-space:nowrap;-webkit-text-stroke:0.15px;">1 k</div>
<div style="position:absolute;left:613.6px;width:600px;text-align:center;top:288.49px;font-size:6.8px;line-height:8.16px;color:#3be3ea;white-space:nowrap;-webkit-text-stroke:0.15px;">2 k</div>
<div style="position:absolute;left:629px;width:600px;text-align:center;top:288.49px;font-size:6.8px;line-height:8.16px;color:#3be3ea;white-space:nowrap;-webkit-text-stroke:0.15px;">4 k</div>
<div style="position:absolute;left:644.6px;width:600px;text-align:center;top:288.49px;font-size:6.8px;line-height:8.16px;color:#3be3ea;white-space:nowrap;-webkit-text-stroke:0.15px;">8 k</div>
<div style="position:absolute;left:662px;width:600px;text-align:center;top:288.49px;font-size:6.8px;line-height:8.16px;color:#3be3ea;white-space:nowrap;-webkit-text-stroke:0.15px;">16 k</div>
<div style="position:absolute;left:588px;width:600px;text-align:center;top:296.42px;font-size:6.4px;line-height:7.68px;color:#3be3ea;white-space:nowrap;-webkit-text-stroke:0.15px;">Frequency (Hz)</div>
<div style="position:absolute;left:779.5px;top:245.5px;width:0;height:0;"><div style="position:absolute;left:-40px;top:-4px;width:80px;text-align:center;font-size:7px;line-height:8px;-webkit-text-stroke:0.15px;color:#3be3ea;transform:rotate(-90deg) scaleX(0.8);white-space:nowrap;">Magnitude (dBV)</div></div>
<div style="position:absolute;left:775px;top:305.5px;width:201px;height:33px;background:#e6e6e6;"></div>
<div style="position:absolute;left:775px;top:305.5px;width:4.2px;height:33px;background:linear-gradient(90deg,#1a1a1a,#4a4a4a);"></div>
<div style="position:absolute;left:970.6px;top:305.5px;width:5.4px;height:33px;background:#d4d4d4;"></div>
<div style="position:absolute;left:779px;top:305.5px;width:191.6px;height:9px;background:linear-gradient(#d8d8d8,#e6e6e6);"></div>
<div style="position:absolute;left:801.8px;top:314.2px;width:145.8px;height:7.6px;background:#fff;border-radius:2px;box-shadow:0 0 0 0.5px #cfcfcf, 0 0.5px 0.6px #b8b8b8;"></div>
<div style="position:absolute;left:519.3px;width:600px;text-align:center;top:314.03px;font-size:6.2px;line-height:7.4399999999999995px;color:#222;white-space:nowrap;">Live Input</div>
<div style="position:absolute;left:836.8px;top:314.2px;width:49.5px;height:7.6px;background:#e0e0e0;"></div>
<div style="position:absolute;left:561.55px;width:600px;text-align:center;top:314.03px;font-size:6.2px;line-height:7.4399999999999995px;color:#222;white-space:nowrap;">Measurement</div>
<div style="position:absolute;left:601.55px;width:600px;text-align:center;top:314.03px;font-size:6.2px;line-height:7.4399999999999995px;color:#222;white-space:nowrap;">Display</div>
<div style="position:absolute;left:632.1999999999999px;width:600px;text-align:center;top:314.03px;font-size:6.2px;line-height:7.4399999999999995px;color:#222;white-space:nowrap;">Cursors</div>
<div style="position:absolute;left:789.8px;top:328.17px;font-size:6.3px;line-height:7.56px;color:#222;white-space:nowrap;">Bandwidth:</div>
<div style="position:absolute;right:65px;top:328.17px;font-size:6.3px;line-height:7.56px;color:#222;white-space:nowrap;transform:scaleX(0.93);transform-origin:100% 50%;">Frequency Weighting:</div>
<div style="position:absolute;left:916.7px;top:328.2px;width:40.3px;height:7.6px;background:#fff;border-radius:2px;box-shadow:0 0 0 0.5px #cdcdcd, 0 0.5px 0.5px #bbb;"></div>
<div style="position:absolute;left:921.2px;top:328.70px;font-size:5.9px;line-height:7.08px;color:#222;white-space:nowrap;">C</div>
<svg style="position:absolute;left:950.0px;top:329.2px" width="5" height="5.6" viewBox="0 0 5 6"><path d="M1 2.3 L2.5 0.9 L4 2.3 M1 3.7 L2.5 5.1 L4 3.7" fill="none" stroke="#333" stroke-width="0.6"/></svg>
<div style="position:absolute;left:775px;top:340px;width:201px;height:29.5px;background:linear-gradient(#f5f5f5,#f1f1f1);"></div>
<div style="position:absolute;left:778.5999999999999px;top:343.1px;width:6.4px;height:6.4px;border-radius:50%;background:#dadada;box-shadow:inset 0 0 0 0.5px #cfcfcf"></div>
<div style="position:absolute;left:789.0999999999999px;top:343.1px;width:6.4px;height:6.4px;border-radius:50%;background:#dadada;box-shadow:inset 0 0 0 0.5px #cfcfcf"></div>
<div style="position:absolute;left:799.5999999999999px;top:343.1px;width:6.4px;height:6.4px;border-radius:50%;background:#dadada;box-shadow:inset 0 0 0 0.5px #cfcfcf"></div>
<div style="position:absolute;left:574px;width:600px;text-align:center;top:342.58px;font-size:7px;line-height:8.4px;color:#b8b8b8;white-space:nowrap;">Octave Band Analyzer 3</div>
<svg style="position:absolute;left:779.4000000000001px;top:353.7px" width="11.6" height="11.6" viewBox="0 0 12 12"><circle cx="6" cy="6" r="5.9" fill="#0f2464"/><circle cx="6" cy="6.1" r="4.9" fill="url(#bg1)"/><circle cx="6" cy="5.5" r="2" fill="none" stroke="#a8c0ee" stroke-width="0.9"/></svg>
<svg style="position:absolute;left:795.9000000000001px;top:353.7px" width="11.6" height="11.6" viewBox="0 0 12 12"><circle cx="6" cy="6" r="5.9" fill="#0f2464"/><circle cx="6" cy="6.1" r="4.9" fill="url(#bg1)"/><circle cx="3.8" cy="6.8" r="0.9" fill="#fff"/><circle cx="8.2" cy="5.6" r="0.9" fill="#fff"/><rect x="3.5" y="3.6" width="5" height="0.9" fill="#b8ccf3"/></svg>
<svg style="position:absolute;left:861.4000000000001px;top:353.7px" width="11.6" height="11.6" viewBox="0 0 12 12"><circle cx="6" cy="6" r="5.9" fill="#0f2464"/><circle cx="6" cy="6.1" r="4.9" fill="url(#bg1)"/><path d="M4.3 3 L8.8 6 L4.3 9 Z" fill="#e8f0ff"/></svg>
<svg style="position:absolute;left:877.8000000000001px;top:353.7px" width="11.6" height="11.6" viewBox="0 0 12 12"><circle cx="6" cy="6" r="5.9" fill="#0f2464"/><circle cx="6" cy="6.1" r="4.9" fill="url(#bg1)"/><rect x="3.2" y="7.3" width="5.6" height="1.1" fill="#a9c2f2"/><rect x="4.2" y="4.3" width="3.2" height="2.2" fill="#1a3a90"/><rect x="6.5" y="3.6" width="1.2" height="3" fill="#c8d8f8"/></svg>
<svg style="position:absolute;left:894.2px;top:353.7px" width="11.6" height="11.6" viewBox="0 0 12 12"><circle cx="6" cy="6" r="5.9" fill="#0f2464"/><circle cx="6" cy="6.1" r="4.9" fill="url(#bg1)"/><rect x="3.2" y="7.3" width="5.6" height="1.1" fill="#a9c2f2"/><rect x="4.4" y="4.6" width="3.6" height="1.8" fill="#1a3a90"/><rect x="4.6" y="3.8" width="1" height="2.6" fill="#c8d8f8"/></svg>
<svg style="position:absolute;left:959.5px;top:353.7px" width="11.6" height="11.6" viewBox="0 0 12 12"><circle cx="6" cy="6" r="5.9" fill="#0f2464"/><circle cx="6" cy="6.1" r="4.9" fill="url(#bg1)"/><path d="M4.5 4.6 C4.5 2.9 7.5 2.9 7.5 4.5 C7.5 5.6 6.1 5.7 6.1 7.2" fill="none" stroke="#b4cdf6" stroke-width="1.2"/><circle cx="6.1" cy="8.7" r="0.75" fill="#b4cdf6"/></svg>
<div style="position:absolute;left:775px;top:369.5px;width:201px;height:107px;background:#000;"></div>
<svg style="position:absolute;left:0;top:0" width="976" height="510" viewBox="0 0 976 510"><defs><linearGradient id="g340" x1="0" y1="376.7" x2="0" y2="459.7" gradientUnits="userSpaceOnUse"><stop offset="0.00" stop-color="rgb(236, 236, 64)"/><stop offset="0.06" stop-color="rgb(232, 234, 64)"/><stop offset="0.19" stop-color="rgb(176, 226, 48)"/><stop offset="0.31" stop-color="rgb(112, 226, 44)"/><stop offset="0.52" stop-color="rgb(36, 228, 36)"/><stop offset="0.70" stop-color="rgb(32, 196, 90)"/><stop offset="0.84" stop-color="rgb(32, 146, 176)"/><stop offset="0.95" stop-color="rgb(34, 96, 224)"/><stop offset="1.00" stop-color="rgb(34, 70, 226)"/></linearGradient></defs><line x1="807" y1="376.70" x2="968.5" y2="376.70" stroke="#3a3a3a" stroke-width="0.9"/><line x1="807" y1="380.65" x2="968.5" y2="380.65" stroke="#3a3a3a" stroke-width="0.9"/><line x1="807" y1="384.60" x2="968.5" y2="384.60" stroke="#3a3a3a" stroke-width="0.9"/><line x1="807" y1="388.56" x2="968.5" y2="388.56" stroke="#3a3a3a" stroke-width="0.9"/><line x1="807" y1="392.51" x2="968.5" y2="392.51" stroke="#3a3a3a" stroke-width="0.9"/><line x1="807" y1="396.46" x2="968.5" y2="396.46" stroke="#3a3a3a" stroke-width="0.9"/><line x1="807" y1="400.41" x2="968.5" y2="400.41" stroke="#3a3a3a" stroke-width="0.9"/><line x1="807" y1="404.37" x2="968.5" y2="404.37" stroke="#3a3a3a" stroke-width="0.9"/><line x1="807" y1="408.32" x2="968.5" y2="408.32" stroke="#3a3a3a" stroke-width="0.9"/><line x1="807" y1="412.27" x2="968.5" y2="412.27" stroke="#3a3a3a" stroke-width="0.9"/><line x1="807" y1="416.22" x2="968.5" y2="416.22" stroke="#3a3a3a" stroke-width="0.9"/><line x1="807" y1="420.18" x2="968.5" y2="420.18" stroke="#3a3a3a" stroke-width="0.9"/><line x1="807" y1="424.13" x2="968.5" y2="424.13" stroke="#3a3a3a" stroke-width="0.9"/><line x1="807" y1="428.08" x2="968.5" y2="428.08" stroke="#3a3a3a" stroke-width="0.9"/><line x1="807" y1="432.03" x2="968.5" y2="432.03" stroke="#3a3a3a" stroke-width="0.9"/><line x1="807" y1="435.99" x2="968.5" y2="435.99" stroke="#3a3a3a" stroke-width="0.9"/><line x1="807" y1="439.94" x2="968.5" y2="439.94" stroke="#3a3a3a" stroke-width="0.9"/><line x1="807" y1="443.89" x2="968.5" y2="443.89" stroke="#3a3a3a" stroke-width="0.9"/><line x1="807" y1="447.84" x2="968.5" y2="447.84" stroke="#3a3a3a" stroke-width="0.9"/><line x1="807" y1="451.80" x2="968.5" y2="451.80" stroke="#3a3a3a" stroke-width="0.9"/><line x1="807" y1="455.75" x2="968.5" y2="455.75" stroke="#3a3a3a" stroke-width="0.9"/><line x1="807" y1="459.70" x2="968.5" y2="459.70" stroke="#3a3a3a" stroke-width="0.9"/><line x1="968.5" y1="376.7" x2="968.5" y2="459.7" stroke="#3a3a3a" stroke-width="0.9"/><rect x="807" y="393" width="161.5" height="3.6000000000000227" fill="#0e1a78" fill-opacity="0.95"/><rect x="807.30" y="445.00" width="4.3" height="14.70" fill="url(#g340)"/><rect x="812.52" y="443.60" width="4.3" height="16.10" fill="url(#g340)"/><rect x="817.74" y="436.40" width="4.3" height="23.30" fill="url(#g340)"/><rect x="822.96" y="430.00" width="4.3" height="29.70" fill="url(#g340)"/><rect x="828.18" y="423.60" width="4.3" height="36.10" fill="url(#g340)"/><rect x="833.40" y="412.00" width="4.3" height="47.70" fill="url(#g340)"/><rect x="838.62" y="409.40" width="4.3" height="50.30" fill="url(#g340)"/><rect x="843.84" y="401.00" width="4.3" height="58.70" fill="url(#g340)"/><rect x="849.06" y="405.40" width="4.3" height="54.30" fill="url(#g340)"/><rect x="854.28" y="409.00" width="4.3" height="50.70" fill="url(#g340)"/><rect x="859.50" y="406.60" width="4.3" height="53.10" fill="url(#g340)"/><rect x="864.72" y="406.60" width="4.3" height="53.10" fill="url(#g340)"/><rect x="869.94" y="405.00" width="4.3" height="54.70" fill="url(#g340)"/><rect x="875.16" y="395.00" width="4.3" height="64.70" fill="url(#g340)"/><rect x="880.38" y="393.00" width="4.3" height="66.70" fill="url(#g340)"/><rect x="885.60" y="402.00" width="4.3" height="57.70" fill="url(#g340)"/><rect x="890.82" y="402.40" width="4.3" height="57.30" fill="url(#g340)"/><rect x="896.04" y="406.00" width="4.3" height="53.70" fill="url(#g340)"/><rect x="901.26" y="409.00" width="4.3" height="50.70" fill="url(#g340)"/><rect x="906.48" y="410.60" width="4.3" height="49.10" fill="url(#g340)"/><rect x="911.70" y="413.60" width="4.3" height="46.10" fill="url(#g340)"/><rect x="916.92" y="417.00" width="4.3" height="42.70" fill="url(#g340)"/><rect x="922.14" y="421.00" width="4.3" height="38.70" fill="url(#g340)"/><rect x="927.36" y="421.60" width="4.3" height="38.10" fill="url(#g340)"/><rect x="932.58" y="421.60" width="4.3" height="38.10" fill="url(#g340)"/><rect x="937.80" y="423.00" width="4.3" height="36.70" fill="url(#g340)"/><rect x="943.02" y="425.00" width="4.3" height="34.70" fill="url(#g340)"/><rect x="948.24" y="428.60" width="4.3" height="31.10" fill="url(#g340)"/><rect x="953.46" y="434.60" width="4.3" height="25.10" fill="url(#g340)"/><rect x="958.68" y="446.00" width="4.3" height="13.70" fill="url(#g340)"/><line x1="807" y1="380.65" x2="966" y2="380.65" stroke="#000" stroke-opacity="0.42" stroke-width="0.8"/><line x1="807" y1="384.60" x2="966" y2="384.60" stroke="#000" stroke-opacity="0.42" stroke-width="0.8"/><line x1="807" y1="388.56" x2="966" y2="388.56" stroke="#000" stroke-opacity="0.42" stroke-width="0.8"/><line x1="807" y1="392.51" x2="966" y2="392.51" stroke="#000" stroke-opacity="0.42" stroke-width="0.8"/><line x1="807" y1="396.46" x2="966" y2="396.46" stroke="#000" stroke-opacity="0.42" stroke-width="0.8"/><line x1="807" y1="400.41" x2="966" y2="400.41" stroke="#000" stroke-opacity="0.42" stroke-width="0.8"/><line x1="807" y1="404.37" x2="966" y2="404.37" stroke="#000" stroke-opacity="0.42" stroke-width="0.8"/><line x1="807" y1="408.32" x2="966" y2="408.32" stroke="#000" stroke-opacity="0.42" stroke-width="0.8"/><line x1="807" y1="412.27" x2="966" y2="412.27" stroke="#000" stroke-opacity="0.42" stroke-width="0.8"/><line x1="807" y1="416.22" x2="966" y2="416.22" stroke="#000" stroke-opacity="0.42" stroke-width="0.8"/><line x1="807" y1="420.18" x2="966" y2="420.18" stroke="#000" stroke-opacity="0.42" stroke-width="0.8"/><line x1="807" y1="424.13" x2="966" y2="424.13" stroke="#000" stroke-opacity="0.42" stroke-width="0.8"/><line x1="807" y1="428.08" x2="966" y2="428.08" stroke="#000" stroke-opacity="0.42" stroke-width="0.8"/><line x1="807" y1="432.03" x2="966" y2="432.03" stroke="#000" stroke-opacity="0.42" stroke-width="0.8"/><line x1="807" y1="435.99" x2="966" y2="435.99" stroke="#000" stroke-opacity="0.42" stroke-width="0.8"/><line x1="807" y1="439.94" x2="966" y2="439.94" stroke="#000" stroke-opacity="0.42" stroke-width="0.8"/><line x1="807" y1="443.89" x2="966" y2="443.89" stroke="#000" stroke-opacity="0.42" stroke-width="0.8"/><line x1="807" y1="447.84" x2="966" y2="447.84" stroke="#000" stroke-opacity="0.42" stroke-width="0.8"/><line x1="807" y1="451.80" x2="966" y2="451.80" stroke="#000" stroke-opacity="0.42" stroke-width="0.8"/><line x1="807" y1="455.75" x2="966" y2="455.75" stroke="#000" stroke-opacity="0.42" stroke-width="0.8"/><line x1="807" y1="393.60" x2="968" y2="393.60" stroke="#000" stroke-opacity="0.35" stroke-width="1"/><line x1="877.3" y1="376.7" x2="877.3" y2="459.7" stroke="#2030c0" stroke-opacity="0.75" stroke-width="1.8"/></svg>
<div style="position:absolute;right:170px;top:372.59px;font-size:6.8px;line-height:8.16px;color:#3be3ea;white-space:nowrap;-webkit-text-stroke:0.15px;">45.0</div>
<div style="position:absolute;right:170px;top:380.89px;font-size:6.8px;line-height:8.16px;color:#3be3ea;white-space:nowrap;-webkit-text-stroke:0.15px;">40.0</div>
<div style="position:absolute;right:170px;top:389.19px;font-size:6.8px;line-height:8.16px;color:#3be3ea;white-space:nowrap;-webkit-text-stroke:0.15px;">35.0</div>
<div style="position:absolute;right:170px;top:397.49px;font-size:6.8px;line-height:8.16px;color:#3be3ea;white-space:nowrap;-webkit-text-stroke:0.15px;">30.0</div>
<div style="position:absolute;right:170px;top:405.79px;font-size:6.8px;line-height:8.16px;color:#3be3ea;white-space:nowrap;-webkit-text-stroke:0.15px;">25.0</div>
<div style="position:absolute;right:170px;top:414.09px;font-size:6.8px;line-height:8.16px;color:#3be3ea;white-space:nowrap;-webkit-text-stroke:0.15px;">20.0</div>
<div style="position:absolute;right:170px;top:422.39px;font-size:6.8px;line-height:8.16px;color:#3be3ea;white-space:nowrap;-webkit-text-stroke:0.15px;">15.0</div>
<div style="position:absolute;right:170px;top:430.69px;font-size:6.8px;line-height:8.16px;color:#3be3ea;white-space:nowrap;-webkit-text-stroke:0.15px;">10.0</div>
<div style="position:absolute;right:170px;top:438.99px;font-size:6.8px;line-height:8.16px;color:#3be3ea;white-space:nowrap;-webkit-text-stroke:0.15px;">5.0</div>
<div style="position:absolute;right:170px;top:447.29px;font-size:6.8px;line-height:8.16px;color:#3be3ea;white-space:nowrap;-webkit-text-stroke:0.15px;">0.0</div>
<div style="position:absolute;right:170px;top:455.59px;font-size:6.8px;line-height:8.16px;color:#3be3ea;white-space:nowrap;-webkit-text-stroke:0.15px;">-5.0</div>
<div style="position:absolute;left:521px;width:600px;text-align:center;top:459.49px;font-size:6.8px;line-height:8.16px;color:#3be3ea;white-space:nowrap;-webkit-text-stroke:0.15px;">31.3</div>
<div style="position:absolute;left:535px;width:600px;text-align:center;top:459.49px;font-size:6.8px;line-height:8.16px;color:#3be3ea;white-space:nowrap;-webkit-text-stroke:0.15px;">63</div>
<div style="position:absolute;left:551px;width:600px;text-align:center;top:459.49px;font-size:6.8px;line-height:8.16px;color:#3be3ea;white-space:nowrap;-webkit-text-stroke:0.15px;">125</div>
<div style="position:absolute;left:566.6px;width:600px;text-align:center;top:459.49px;font-size:6.8px;line-height:8.16px;color:#3be3ea;white-space:nowrap;-webkit-text-stroke:0.15px;">250</div>
<div style="position:absolute;left:582px;width:600px;text-align:center;top:459.49px;font-size:6.8px;line-height:8.16px;color:#3be3ea;white-space:nowrap;-webkit-text-stroke:0.15px;">500</div>
<div style="position:absolute;left:598px;width:600px;text-align:center;top:459.49px;font-size:6.8px;line-height:8.16px;color:#3be3ea;white-space:nowrap;-webkit-text-stroke:0.15px;">1 k</div>
<div style="position:absolute;left:613.6px;width:600px;text-align:center;top:459.49px;font-size:6.8px;line-height:8.16px;color:#3be3ea;white-space:nowrap;-webkit-text-stroke:0.15px;">2 k</div>
<div style="position:absolute;left:629px;width:600px;text-align:center;top:459.49px;font-size:6.8px;line-height:8.16px;color:#3be3ea;white-space:nowrap;-webkit-text-stroke:0.15px;">4 k</div>
<div style="position:absolute;left:644.6px;width:600px;text-align:center;top:459.49px;font-size:6.8px;line-height:8.16px;color:#3be3ea;white-space:nowrap;-webkit-text-stroke:0.15px;">8 k</div>
<div style="position:absolute;left:662px;width:600px;text-align:center;top:459.49px;font-size:6.8px;line-height:8.16px;color:#3be3ea;white-space:nowrap;-webkit-text-stroke:0.15px;">16 k</div>
<div style="position:absolute;left:588px;width:600px;text-align:center;top:467.42px;font-size:6.4px;line-height:7.68px;color:#3be3ea;white-space:nowrap;-webkit-text-stroke:0.15px;">Frequency (Hz)</div>
<div style="position:absolute;left:779.5px;top:416.5px;width:0;height:0;"><div style="position:absolute;left:-40px;top:-4px;width:80px;text-align:center;font-size:7px;line-height:8px;-webkit-text-stroke:0.15px;color:#3be3ea;transform:rotate(-90deg) scaleX(0.8);white-space:nowrap;">Magnitude (dBV)</div></div>
<div style="position:absolute;left:775px;top:476.5px;width:201px;height:33px;background:#e6e6e6;"></div>
<div style="position:absolute;left:775px;top:476.5px;width:4.2px;height:33px;background:linear-gradient(90deg,#1a1a1a,#4a4a4a);"></div>
<div style="position:absolute;left:970.6px;top:476.5px;width:5.4px;height:33px;background:#d4d4d4;"></div>
<div style="position:absolute;left:779px;top:476.5px;width:191.6px;height:9px;background:linear-gradient(#d8d8d8,#e6e6e6);"></div>
<div style="position:absolute;left:801.8px;top:485.2px;width:145.8px;height:7.6px;background:#fff;border-radius:2px;box-shadow:0 0 0 0.5px #cfcfcf, 0 0.5px 0.6px #b8b8b8;"></div>
<div style="position:absolute;left:519.3px;width:600px;text-align:center;top:485.03px;font-size:6.2px;line-height:7.4399999999999995px;color:#222;white-space:nowrap;">Live Input</div>
<div style="position:absolute;left:836.8px;top:485.2px;width:49.5px;height:7.6px;background:#e0e0e0;"></div>
<div style="position:absolute;left:561.55px;width:600px;text-align:center;top:485.03px;font-size:6.2px;line-height:7.4399999999999995px;color:#222;white-space:nowrap;">Measurement</div>
<div style="position:absolute;left:601.55px;width:600px;text-align:center;top:485.03px;font-size:6.2px;line-height:7.4399999999999995px;color:#222;white-space:nowrap;">Display</div>
<div style="position:absolute;left:632.1999999999999px;width:600px;text-align:center;top:485.03px;font-size:6.2px;line-height:7.4399999999999995px;color:#222;white-space:nowrap;">Cursors</div>
<div style="position:absolute;left:789.8px;top:499.17px;font-size:6.3px;line-height:7.56px;color:#222;white-space:nowrap;">Bandwidth:</div>
<div style="position:absolute;right:65px;top:499.17px;font-size:6.3px;line-height:7.56px;color:#222;white-space:nowrap;transform:scaleX(0.93);transform-origin:100% 50%;">Frequency Weighting:</div>
<div style="position:absolute;left:916.7px;top:499.2px;width:40.3px;height:7.6px;background:#fff;border-radius:2px;box-shadow:0 0 0 0.5px #cdcdcd, 0 0.5px 0.5px #bbb;"></div>
<div style="position:absolute;left:921.2px;top:499.70px;font-size:5.9px;line-height:7.08px;color:#222;white-space:nowrap;">A</div>
<svg style="position:absolute;left:950.0px;top:500.2px" width="5" height="5.6" viewBox="0 0 5 6"><path d="M1 2.3 L2.5 0.9 L4 2.3 M1 3.7 L2.5 5.1 L4 3.7" fill="none" stroke="#333" stroke-width="0.6"/></svg>
<div style="position:absolute;left:585.5px;top:0.5px;width:188.5px;height:30.5px;background:linear-gradient(#f4f4f4,#f0f0f0);"></div>
<div style="position:absolute;left:669.5px;top:31px;width:103.5px;height:100px;background:#000;"></div>
<div style="position:absolute;left:772.8px;top:0.5px;width:1.6px;height:130.5px;background:#cfcfcf;"></div>
<div style="position:absolute;left:589.0999999999999px;top:3.5999999999999996px;width:6.4px;height:6.4px;border-radius:50%;background:#dadada;box-shadow:inset 0 0 0 0.5px #cfcfcf"></div>
<div style="position:absolute;left:599.5999999999999px;top:3.5999999999999996px;width:6.4px;height:6.4px;border-radius:50%;background:#dadada;box-shadow:inset 0 0 0 0.5px #cfcfcf"></div>
<div style="position:absolute;left:610.0999999999999px;top:3.5999999999999996px;width:6.4px;height:6.4px;border-radius:50%;background:#dadada;box-shadow:inset 0 0 0 0.5px #cfcfcf"></div>
<div style="position:absolute;left:379.5px;width:600px;text-align:center;top:3.08px;font-size:7px;line-height:8.4px;color:#b4b4b4;white-space:nowrap;">Sound Level Meter</div>
<svg style="position:absolute;left:671.4px;top:13.5px" width="12.0" height="12.0" viewBox="0 0 12 12"><circle cx="6" cy="6" r="5.9" fill="#0f2464"/><circle cx="6" cy="6.1" r="4.9" fill="url(#bg1)"/><rect x="3.2" y="7.3" width="5.6" height="1.1" fill="#a9c2f2"/><rect x="4.2" y="4.3" width="3.2" height="2.2" fill="#1a3a90"/><rect x="6.5" y="3.6" width="1.2" height="3" fill="#c8d8f8"/></svg>
<svg style="position:absolute;left:687.9px;top:13.5px" width="12.0" height="12.0" viewBox="0 0 12 12"><circle cx="6" cy="6" r="5.9" fill="#0f2464"/><circle cx="6" cy="6.1" r="4.9" fill="url(#bg1)"/><rect x="3.2" y="7.3" width="5.6" height="1.1" fill="#a9c2f2"/><rect x="4.4" y="4.6" width="3.6" height="1.8" fill="#1a3a90"/><rect x="4.6" y="3.8" width="1" height="2.6" fill="#c8d8f8"/></svg>
<div style="position:absolute;left:686px;top:31.9px;width:80px;height:50px;overflow:visible;"><div style="position:absolute;left:0;top:0;font-size:51px;line-height:50px;color:#3be3ea;transform:scaleX(0.81);transform-origin:0 0;white-space:nowrap;letter-spacing:-0.5px;-webkit-text-stroke:0.9px #3be3ea;">64.3</div></div>
<div style="position:absolute;left:431.70000000000005px;width:600px;text-align:center;top:76.21px;font-size:8.2px;line-height:9.839999999999998px;color:#3be3ea;white-space:nowrap;transform:scaleX(0.86);-webkit-text-stroke:0.2px;">dB Re 1 V</div>
<div style="position:absolute;right:297.70000000000005px;top:88.32px;font-size:10.5px;line-height:12.6px;color:#3be3ea;white-space:nowrap;transform:scaleX(0.85);transform-origin:100% 50%;-webkit-text-stroke:0.2px;">63.1</div>
<div style="position:absolute;left:697.7px;top:102.29px;font-size:9.3px;line-height:11.16px;color:#3be3ea;white-space:nowrap;transform:scaleX(0.80);transform-origin:0 50%;-webkit-text-stroke:0.2px;">Leq (V), Flat, Fast</div>
<div style="position:absolute;left:667px;top:115.39px;font-size:9.3px;line-height:11.16px;color:#3be3ea;white-space:nowrap;transform:scaleX(0.82);transform-origin:0 50%;-webkit-text-stroke:0.2px;">Time:</div>
<div style="position:absolute;left:700px;top:115.39px;font-size:9.3px;line-height:11.16px;color:#3be3ea;white-space:nowrap;transform:scaleX(0.80);transform-origin:0 50%;-webkit-text-stroke:0.2px;">0h  0m 40.65s</div>
<div style="position:absolute;left:586px;top:131px;width:188px;height:2.5px;background:#d8d8d8;"></div>
<div style="position:absolute;left:586px;top:133.2px;width:188px;height:30.5px;background:linear-gradient(#f4f4f4,#f0f0f0);"></div>
<div style="position:absolute;left:669.5px;top:163.7px;width:103.5px;height:100px;background:#000;"></div>
<div style="position:absolute;left:772.8px;top:133.2px;width:1.6px;height:130.5px;background:#cfcfcf;"></div>
<div style="position:absolute;left:379.5px;width:600px;text-align:center;top:135.78px;font-size:7px;line-height:8.4px;color:#b4b4b4;white-space:nowrap;">Sound Level Meter 3</div>
<svg style="position:absolute;left:671.4px;top:146.2px" width="12.0" height="12.0" viewBox="0 0 12 12"><circle cx="6" cy="6" r="5.9" fill="#0f2464"/><circle cx="6" cy="6.1" r="4.9" fill="url(#bg1)"/><rect x="3.2" y="7.3" width="5.6" height="1.1" fill="#a9c2f2"/><rect x="4.2" y="4.3" width="3.2" height="2.2" fill="#1a3a90"/><rect x="6.5" y="3.6" width="1.2" height="3" fill="#c8d8f8"/></svg>
<svg style="position:absolute;left:687.9px;top:146.2px" width="12.0" height="12.0" viewBox="0 0 12 12"><circle cx="6" cy="6" r="5.9" fill="#0f2464"/><circle cx="6" cy="6.1" r="4.9" fill="url(#bg1)"/><rect x="3.2" y="7.3" width="5.6" height="1.1" fill="#a9c2f2"/><rect x="4.4" y="4.6" width="3.6" height="1.8" fill="#1a3a90"/><rect x="4.6" y="3.8" width="1" height="2.6" fill="#c8d8f8"/></svg>
<div style="position:absolute;left:686px;top:164.6px;width:80px;height:50px;overflow:visible;"><div style="position:absolute;left:0;top:0;font-size:51px;line-height:50px;color:#3be3ea;transform:scaleX(0.81);transform-origin:0 0;white-space:nowrap;letter-spacing:-0.5px;-webkit-text-stroke:0.9px #3be3ea;">57.7</div></div>
<div style="position:absolute;left:431.70000000000005px;width:600px;text-align:center;top:208.91px;font-size:8.2px;line-height:9.839999999999998px;color:#3be3ea;white-space:nowrap;transform:scaleX(0.86);-webkit-text-stroke:0.2px;">dB Re 1 V</div>
<div style="position:absolute;right:297.70000000000005px;top:221.02px;font-size:10.5px;line-height:12.6px;color:#3be3ea;white-space:nowrap;transform:scaleX(0.85);transform-origin:100% 50%;-webkit-text-stroke:0.2px;">59.8</div>
<div style="position:absolute;left:697.7px;top:234.99px;font-size:9.3px;line-height:11.16px;color:#3be3ea;white-space:nowrap;transform:scaleX(0.80);transform-origin:0 50%;-webkit-text-stroke:0.2px;">Leq (V), C, Fast</div>
<div style="position:absolute;left:667px;top:248.09px;font-size:9.3px;line-height:11.16px;color:#3be3ea;white-space:nowrap;transform:scaleX(0.82);transform-origin:0 50%;-webkit-text-stroke:0.2px;">Time:</div>
<div style="position:absolute;left:700px;top:248.09px;font-size:9.3px;line-height:11.16px;color:#3be3ea;white-space:nowrap;transform:scaleX(0.80);transform-origin:0 50%;-webkit-text-stroke:0.2px;">0h  0m 40.65s</div>
<div style="position:absolute;left:586px;top:263.5px;width:188px;height:3px;background:#d8d8d8;"></div>
<div style="position:absolute;left:586px;top:266.3px;width:188px;height:30.19999999999999px;background:linear-gradient(#f4f4f4,#f0f0f0);"></div>
<div style="position:absolute;left:669.5px;top:296.5px;width:103.5px;height:100px;background:#000;"></div>
<div style="position:absolute;left:772.8px;top:266.3px;width:1.6px;height:130.2px;background:#cfcfcf;"></div>
<div style="position:absolute;left:379.5px;width:600px;text-align:center;top:268.58px;font-size:7px;line-height:8.4px;color:#b4b4b4;white-space:nowrap;">Sound Level Meter 2</div>
<svg style="position:absolute;left:671.4px;top:279.0px" width="12.0" height="12.0" viewBox="0 0 12 12"><circle cx="6" cy="6" r="5.9" fill="#0f2464"/><circle cx="6" cy="6.1" r="4.9" fill="url(#bg1)"/><rect x="3.2" y="7.3" width="5.6" height="1.1" fill="#a9c2f2"/><rect x="4.2" y="4.3" width="3.2" height="2.2" fill="#1a3a90"/><rect x="6.5" y="3.6" width="1.2" height="3" fill="#c8d8f8"/></svg>
<svg style="position:absolute;left:687.9px;top:279.0px" width="12.0" height="12.0" viewBox="0 0 12 12"><circle cx="6" cy="6" r="5.9" fill="#0f2464"/><circle cx="6" cy="6.1" r="4.9" fill="url(#bg1)"/><rect x="3.2" y="7.3" width="5.6" height="1.1" fill="#a9c2f2"/><rect x="4.4" y="4.6" width="3.6" height="1.8" fill="#1a3a90"/><rect x="4.6" y="3.8" width="1" height="2.6" fill="#c8d8f8"/></svg>
<div style="position:absolute;left:686px;top:297.4px;width:80px;height:50px;overflow:visible;"><div style="position:absolute;left:0;top:0;font-size:51px;line-height:50px;color:#3be3ea;transform:scaleX(0.81);transform-origin:0 0;white-space:nowrap;letter-spacing:-0.5px;-webkit-text-stroke:0.9px #3be3ea;">41.3</div></div>
<div style="position:absolute;left:431.70000000000005px;width:600px;text-align:center;top:341.71px;font-size:8.2px;line-height:9.839999999999998px;color:#3be3ea;white-space:nowrap;transform:scaleX(0.86);-webkit-text-stroke:0.2px;">dB Re 1 V</div>
<div style="position:absolute;right:297.70000000000005px;top:353.82px;font-size:10.5px;line-height:12.6px;color:#3be3ea;white-space:nowrap;transform:scaleX(0.85);transform-origin:100% 50%;-webkit-text-stroke:0.2px;">38.0</div>
<div style="position:absolute;left:697.7px;top:367.79px;font-size:9.3px;line-height:11.16px;color:#3be3ea;white-space:nowrap;transform:scaleX(0.80);transform-origin:0 50%;-webkit-text-stroke:0.2px;">Leq (V), A, Fast</div>
<div style="position:absolute;left:667px;top:380.89px;font-size:9.3px;line-height:11.16px;color:#3be3ea;white-space:nowrap;transform:scaleX(0.82);transform-origin:0 50%;-webkit-text-stroke:0.2px;">Time:</div>
<div style="position:absolute;left:700px;top:380.89px;font-size:9.3px;line-height:11.16px;color:#3be3ea;white-space:nowrap;transform:scaleX(0.80);transform-origin:0 50%;-webkit-text-stroke:0.2px;">0h  0m 40.65s</div>
<div style="position:absolute;left:585px;top:396px;width:189px;height:114px;background:#000;"></div>
<div style="position:absolute;left:589.2px;top:397.5px;width:175.2px;height:111px;background:#ececec;"></div>
<div style="position:absolute;left:772.8px;top:396px;width:1.6px;height:114px;background:#1a1a1a;"></div>
<div style="position:absolute;left:673px;top:398.99px;font-size:6.8px;line-height:8.16px;color:#c8c8c8;white-space:nowrap;transform:scaleX(0.86);transform-origin:0 50%;">AUAudioFilePlayer</div>
<div style="position:absolute;left:684px;top:408.3px;width:76px;height:9.3px;background:#f4f4f4;border-radius:2px;box-shadow:0 0 0 0.5px #cfcfcf;"></div>
<div style="position:absolute;left:415px;width:600px;text-align:center;top:409.47px;font-size:6.3px;line-height:7.56px;color:#c4c4c4;white-space:nowrap;">Untitled</div>
<svg style="position:absolute;left:752px;top:411px" width="5" height="4" viewBox="0 0 5 4"><path d="M1 1 L2.5 2.6 L4 1" fill="none" stroke="#666" stroke-width="0.6"/></svg>
<div style="position:absolute;left:595.4px;top:429.2px;width:163.9px;height:54.3px;background:#fff;box-shadow:0 0 0 0.5px #cfcfcf;"></div>
<div style="position:absolute;left:596px;top:440.5px;width:157px;height:7.8px;background:#d6d6d6;"></div>
<div style="position:absolute;left:596px;top:456.5px;width:157px;height:7.8px;background:#f5f5f5;"></div>
<div style="position:absolute;left:596px;top:472.90000000000003px;width:157px;height:7.8px;background:#f5f5f5;"></div>
<div style="position:absolute;left:753px;top:429.7px;width:0.5px;height:53.3px;background:#e4e4e4;"></div>
<div style="position:absolute;left:597.4px;top:431.47px;font-size:6.3px;line-height:7.56px;color:#555;white-space:nowrap;transform:scaleX(0.9);transform-origin:0 50%;">Audio Files +...</div>
<div style="position:absolute;left:597.4px;top:441.07px;font-size:6.3px;line-height:7.56px;color:#333;white-space:nowrap;transform:scaleX(0.9);transform-origin:0 50%;">IMG_7928.wav</div>
<div style="position:absolute;left:596px;top:488.57px;font-size:6.3px;line-height:7.56px;color:#111;white-space:nowrap;font-weight:bold;transform:scaleX(0.9);transform-origin:0 50%;">IMG_7928.wav</div>
<div style="position:absolute;left:596px;top:496.2px;width:163px;height:9.8px;background:#dedede;border-radius:1px;"></div>
<div style="position:absolute;left:597px;top:498.09px;font-size:5.2px;line-height:6.24px;color:#222;white-space:nowrap;font-weight:bold;transform:scaleX(0.92);transform-origin:0 50%;">Sample Rate:</div>
<div style="position:absolute;left:631.6px;top:498.09px;font-size:5.2px;line-height:6.24px;color:#555;white-space:nowrap;transform:scaleX(0.92);transform-origin:0 50%;">44100 Hz</div>
<div style="position:absolute;left:677.3px;top:498.09px;font-size:5.2px;line-height:6.24px;color:#222;white-space:nowrap;font-weight:bold;transform:scaleX(0.92);transform-origin:0 50%;">Length:</div>
<div style="position:absolute;left:698.4px;top:498.09px;font-size:5.2px;line-height:6.24px;color:#555;white-space:nowrap;transform:scaleX(0.92);transform-origin:0 50%;">00:13.444</div>
<div style="position:absolute;left:764.4px;top:397.5px;width:2.5px;height:81px;background:#d8d8d8;"></div>
<div style="position:absolute;left:585.3px;top:13.9px;width:84px;height:409.5px;background:#ececec;box-shadow:0.5px 1px 2.5px rgba(0,0,0,0.45);"></div>
<div style="position:absolute;left:585.3px;top:13.9px;width:84px;height:11.8px;background:#e9e9e9;"></div>
<div style="position:absolute;left:586.5px;top:25.7px;width:81px;height:377px;background:#fff;"></div>
<div style="position:absolute;left:589.8px;top:17.34px;font-size:6.9px;line-height:8.28px;color:#222;white-space:nowrap;transform:scaleX(0.86);transform-origin:0 50%;">Signal Measurements:</div>
<div style="position:absolute;left:588.9px;top:26.34px;font-size:6.9px;line-height:8.28px;color:#1a1a1a;white-space:nowrap;transform:scaleX(0.88);transform-origin:0 50%;">dF:</div>
<div style="position:absolute;left:617.9px;top:26.34px;font-size:6.9px;line-height:8.28px;color:#1a1a1a;white-space:nowrap;transform:scaleX(0.88);transform-origin:0 50%;">500.000 mHz</div>
<div style="position:absolute;left:588.9px;top:33.64px;font-size:6.9px;line-height:8.28px;color:#1a1a1a;white-space:nowrap;transform:scaleX(0.88);transform-origin:0 50%;">FFT Size:</div>
<div style="position:absolute;left:617.9px;top:33.64px;font-size:6.9px;line-height:8.28px;color:#1a1a1a;white-space:nowrap;transform:scaleX(0.88);transform-origin:0 50%;">88200</div>
<div style="position:absolute;left:588.9px;top:41.04px;font-size:6.9px;line-height:8.28px;color:#1a1a1a;white-space:nowrap;transform:scaleX(0.88);transform-origin:0 50%;">Avgs:</div>
<div style="position:absolute;left:617.9px;top:41.04px;font-size:6.9px;line-height:8.28px;color:#1a1a1a;white-space:nowrap;transform:scaleX(0.88);transform-origin:0 50%;">10</div>
<div style="position:absolute;left:588.9px;top:54.74px;font-size:6.9px;line-height:8.28px;color:#1a1a1a;white-space:nowrap;transform:scaleX(0.88);transform-origin:0 50%;">Analyzer 1:</div>
<div style="position:absolute;left:603.6px;top:62.64px;font-size:6.9px;line-height:8.28px;color:#1a1a1a;white-space:nowrap;transform:scaleX(0.88);transform-origin:0 50%;">6.076 kV peak (abs)</div>
<div style="position:absolute;left:603.6px;top:69.84px;font-size:6.9px;line-height:8.28px;color:#1a1a1a;white-space:nowrap;transform:scaleX(0.88);transform-origin:0 50%;">1.700 kV rms</div>
<div style="position:absolute;left:603.6px;top:76.74px;font-size:6.9px;line-height:8.28px;color:#1a1a1a;white-space:nowrap;transform:scaleX(0.88);transform-origin:0 50%;">Cursor 1:</div>
<div style="position:absolute;left:617.3px;top:83.74px;font-size:6.9px;line-height:8.28px;color:#1a1a1a;white-space:nowrap;transform:scaleX(0.88);transform-origin:0 50%;">X: 442.000 Hz</div>
<div style="position:absolute;left:617.3px;top:91.04px;font-size:6.9px;line-height:8.28px;color:#1a1a1a;white-space:nowrap;transform:scaleX(0.88);transform-origin:0 50%;">Y: 26.77 dBV pk</div>
<div style="position:absolute;left:630.4px;top:408.3px;width:30.2px;height:7.4px;background:#fff;border-radius:1.5px;box-shadow:0 0 0 0.5px #d6d6d6, 0 0.5px 0.5px #bdbdbd;"></div>
<div style="position:absolute;left:345.5px;width:600px;text-align:center;top:408.53px;font-size:6.2px;line-height:7.4399999999999995px;color:#222;white-space:nowrap;">Options</div>

</body></html>
